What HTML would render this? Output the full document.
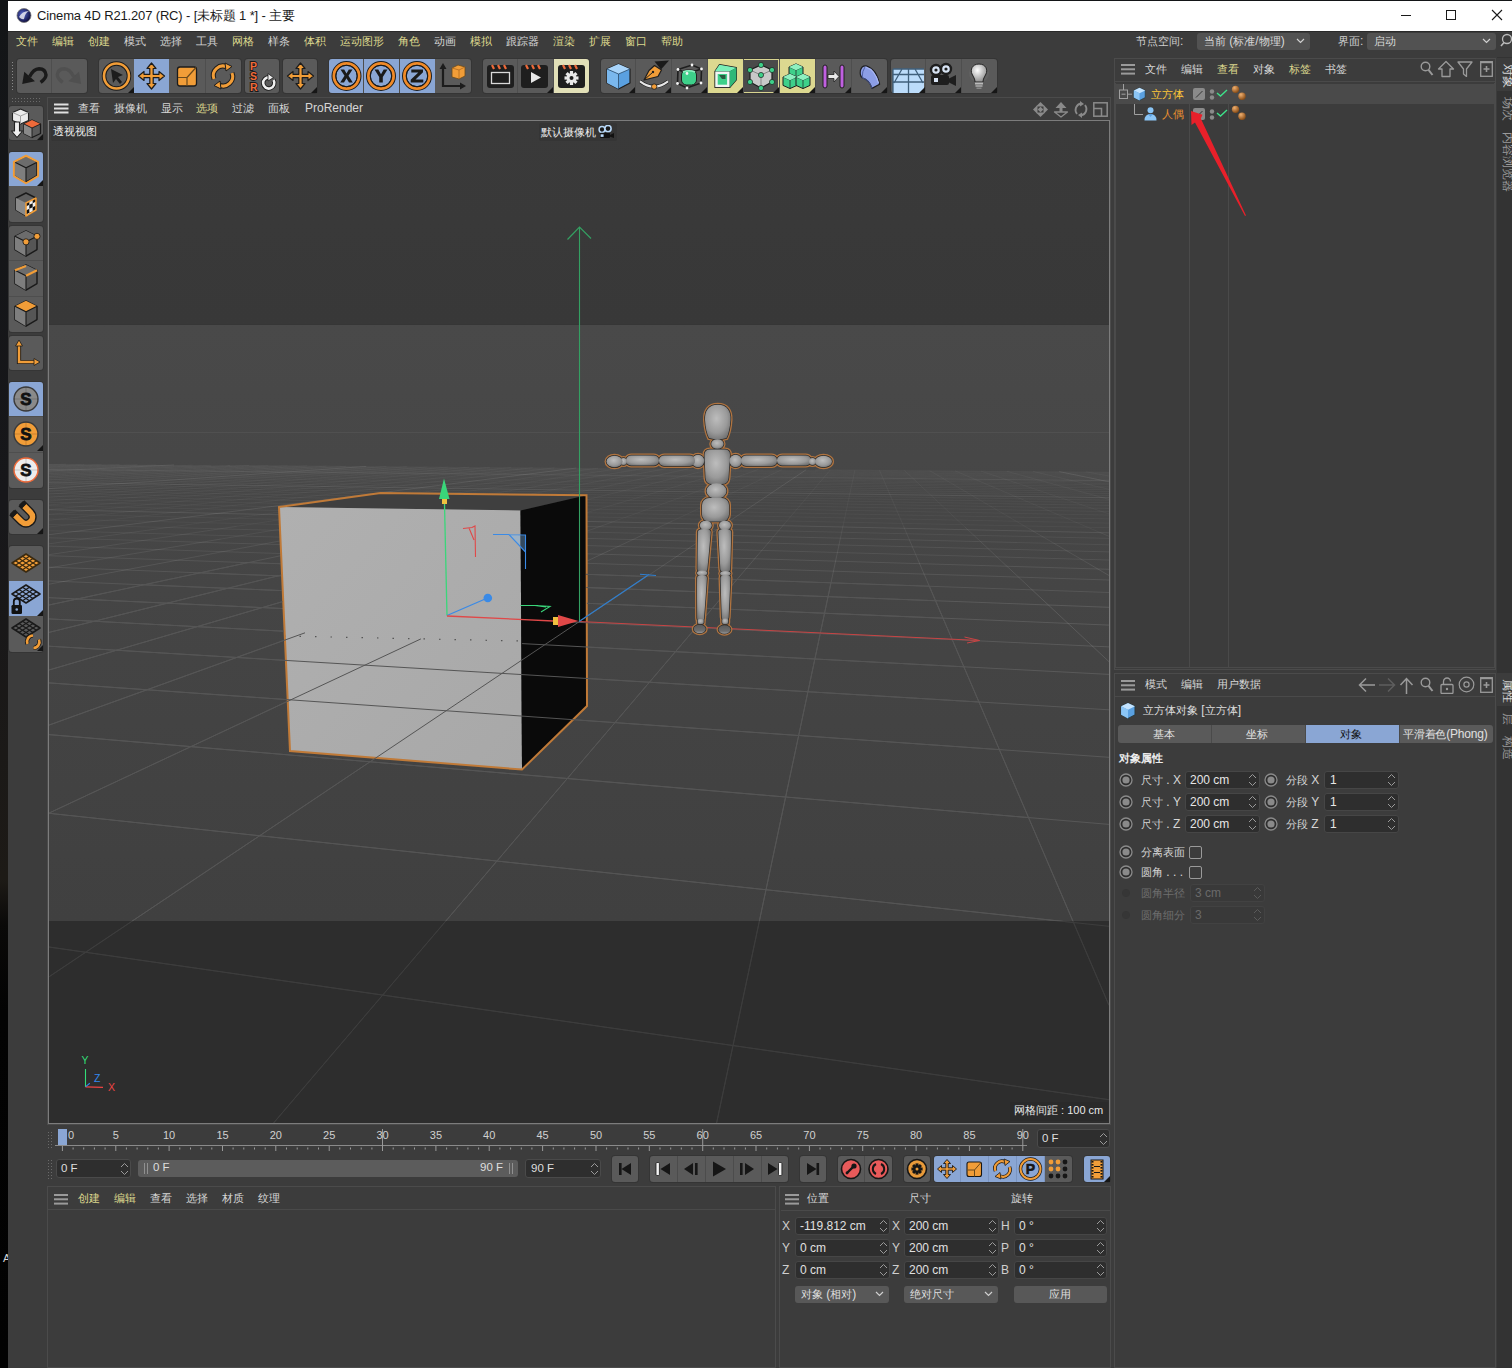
<!DOCTYPE html><html><head><meta charset="utf-8"><style>

*{margin:0;padding:0;box-sizing:border-box}
html,body{width:1512px;height:1368px;overflow:hidden;background:#121212}
body{position:relative;font-family:"Liberation Sans",sans-serif;font-size:12px;color:#d6d6d6}
.a{position:absolute}
.c{font-size:11px}
.t{position:absolute;white-space:nowrap;line-height:1}
.y{color:#dcd98e}
.w{color:#d9d9d9}
.grp{position:absolute;background:#5a5a5a;border-radius:3px;box-shadow:0 0 0 1px #333}
.sep{position:absolute;width:1px;background:#4a4a4a}
.hl{position:absolute;background:#8aa6d4}
.hy{position:absolute;background:#dedcaa}
.tri{position:absolute;width:0;height:0;border-left:6px solid transparent;border-bottom:6px solid #1a1a1a}
.fld{position:absolute;background:#2e2e2e;border:1px solid #262626;border-radius:3px}
.spin{position:absolute;width:8px;height:14px}


</style></head><body>
<div class="a" style="left:0px;top:0px;width:1512px;height:1368px;background:linear-gradient(#131517 0px,#17171a 500px,#1d1a16 880px,#0a0908 925px,#030303 1010px,#020202 1368px)"></div><div class="t" style="left:3px;top:1253px;font-size:11px;color:#d8d8d8">A</div><div class="a" style="left:8px;top:1px;width:1504px;height:30px;background:#ffffff"></div><div class="a" style="left:8px;top:31px;width:1504px;height:1337px;background:#3c3c3c"></div><div class="a" style="left:8px;top:31px;width:1504px;height:1px;background:#2a2a2a"></div>
<div class="a" style="left:47px;top:97px;width:1064px;height:1028px;border:1px solid #4b4b4b;background:#3c3c3c"></div><div class="a" style="left:48px;top:120px;width:1062px;height:1004px;border:1px solid #7c7c7c;background:#3a3a3a"></div><div class="a" style="left:1114px;top:58px;width:382px;height:612px;border:1px solid #4b4b4b;background:#3c3c3c"></div><div class="a" style="left:1114px;top:673px;width:382px;height:695px;border:1px solid #4b4b4b;background:#3c3c3c"></div><div class="a" style="left:1497px;top:57px;width:15px;height:1311px;background:#333333"></div><div class="a" style="left:47px;top:1186px;width:729px;height:182px;border:1px solid #4b4b4b;background:#3c3c3c"></div><div class="a" style="left:779px;top:1186px;width:332px;height:182px;border:1px solid #4b4b4b;background:#3c3c3c"></div>
<svg class="a" style="left:0;top:0" width="1512" height="1368" viewBox="0 0 1512 1368"><defs><clipPath id="vpc"><rect x="49" y="121" width="1060" height="1002"/></clipPath><linearGradient id="gnd" x1="0" y1="0" x2="0" y2="1"><stop offset="0" stop-color="#494949"/><stop offset="0.746" stop-color="#404040"/><stop offset="1" stop-color="#404040"/></linearGradient><linearGradient id="sky" x1="0" y1="0" x2="0" y2="1"><stop offset="0" stop-color="#3a3a3a"/><stop offset="1" stop-color="#383838"/></linearGradient><linearGradient id="ff" x1="0" y1="0" x2="1" y2="1"><stop offset="0" stop-color="#b0b0b0"/><stop offset="1" stop-color="#a8a8a8"/></linearGradient></defs><g clip-path="url(#vpc)"><rect x="49" y="121" width="1060" height="204" fill="url(#sky)"/><rect x="49" y="325" width="1060" height="798" fill="url(#gnd)"/><rect x="49" y="324" width="1060" height="1" fill="#363636"/><line x1="49" y1="432.5" x2="1109" y2="432.5" stroke="#505050" stroke-width="1"/><path d="M49.0 464.8L66.3 464.1M49.0 465.7L83.9 464.3M49.0 466.7L101.6 464.4M49.0 467.6L119.5 464.5M49.0 468.7L137.6 464.7M49.0 469.8L155.8 464.8M49.0 472.2L192.6 465.1M49.0 473.6L211.3 465.2M49.0 475.0L230.1 465.4M49.0 476.5L249.1 465.5M49.0 478.2L268.2 465.7M49.0 479.9L287.5 465.8M49.0 481.8L307.0 465.9M49.0 483.9L326.6 466.1M49.0 486.1L346.4 466.2M49.0 491.2L386.6 466.5M49.0 494.2L406.9 466.7M49.0 497.4L427.4 466.9M49.0 501.0L448.1 467.0M49.0 505.0L469.0 467.2M49.0 509.5L490.1 467.3M49.0 514.6L511.3 467.5M49.0 520.3L532.8 467.7M49.0 527.0L554.4 467.8M167.5 527.5L598.3 468.1M236.8 526.3L620.6 468.3M304.3 525.1L643.0 468.5M370.2 524.0L665.7 468.7M434.6 522.9L688.6 468.8M497.4 521.8L711.7 469.0M558.7 520.8L735.0 469.2M612.6 521.9L758.5 469.4M672.6 520.9L782.2 469.5M784.9 523.3L830.4 469.9M843.3 524.5L854.9 470.1M903.4 525.8L879.5 470.3M965.0 527.1L904.5 470.5M1028.5 528.4L929.6 470.6M1100.2 532.6L955.0 470.8M1109.0 513.9L980.7 471.0M1109.0 499.4L1006.6 471.2M1109.0 489.3L1032.8 471.4M1109.0 476.0L1085.9 471.8M49.0 530.7L75.3 531.4M49.0 524.4L167.5 527.5M49.0 518.9L278.4 524.5M49.0 514.0L408.4 522.3M49.0 505.7L1109.0 527.7M49.0 502.2L1109.0 523.1M49.0 499.0L1109.0 518.9M49.0 496.0L1109.0 515.1M49.0 493.3L1109.0 511.6M49.0 490.8L1109.0 508.4M49.0 488.5L1109.0 505.4M49.0 486.4L1109.0 502.7M49.0 484.5L1109.0 500.1M49.0 480.9L1109.0 495.5M49.0 479.3L1109.0 493.5M49.0 477.8L1109.0 491.5M49.0 476.4L1109.0 489.7M49.0 475.1L1109.0 488.0M49.0 473.9L1109.0 486.4M49.0 472.7L1109.0 484.8M49.0 471.6L1109.0 483.4M49.0 470.5L1109.0 482.0M49.0 468.6L1109.0 479.5M49.0 467.7L1109.0 478.3M49.0 466.8L1109.0 477.2M49.0 466.0L1109.0 476.2M49.0 465.2L1109.0 475.1M49.0 464.5L1109.0 474.2M227.5 465.3L1109.0 473.2M814.8 469.8L1109.0 472.4" stroke="#ffffff" stroke-opacity="0.040" stroke-width="1" fill="none"/><path d="M49.0 543.8L167.5 527.5M119.9 544.0L236.8 526.3M221.2 539.0L304.3 525.1M298.0 537.6L370.2 524.0M372.6 536.1L434.6 522.9M445.2 534.7L497.4 521.8M515.9 533.3L558.7 520.8M576.8 534.8L612.6 521.9M645.8 533.5L672.6 520.9M773.6 536.6L784.9 523.3M840.4 538.2L843.3 524.5M909.4 539.9L903.4 525.8M980.6 541.6L965.0 527.1M1054.1 543.4L1028.5 528.4M1109.0 536.3L1100.2 532.6M49.0 537.8L171.7 541.4M75.3 531.4L298.0 537.6M167.5 527.5L445.2 534.7M278.4 524.5L708.7 535.0M1017.0 542.5L1109.0 544.8M408.4 522.3L1109.0 538.4" stroke="#ffffff" stroke-opacity="0.058" stroke-width="1" fill="none"/><path d="M49.0 554.7L119.9 544.0M81.8 562.4L221.2 539.0M177.3 560.2L298.0 537.6M289.7 553.8L372.6 536.1M375.7 551.8L445.2 534.7M445.3 554.0L515.9 533.3M529.0 552.0L576.8 534.8M610.2 550.2L645.8 533.5M758.4 554.4L773.6 536.6M836.5 556.7L840.4 538.2M917.6 559.0L909.4 539.9M1001.7 561.4L980.6 541.6M1089.1 563.9L1054.1 543.4M49.0 555.7L177.3 560.2M49.0 546.1L324.0 554.9M171.7 541.4L493.7 551.0M298.0 537.6L1109.0 560.0M445.2 534.7L1109.0 551.9M708.7 535.0L1017.0 542.5" stroke="#ffffff" stroke-opacity="0.075" stroke-width="1" fill="none"/><path d="M49.0 471.0L174.1 464.9M49.0 488.6L366.4 466.4M49.0 534.7L576.3 468.0M49.0 567.9L81.8 562.4M49.0 584.2L177.3 560.2M111.8 591.6L289.7 553.8M227.6 588.3L375.7 551.8M338.8 585.2L445.3 554.0M445.5 582.2L529.0 552.0M548.1 579.2L610.2 550.2M637.8 582.5L806.2 469.7M736.9 579.6L758.4 554.4M831.0 582.8L836.5 556.7M929.3 586.2L917.6 559.0M1032.1 589.8L1001.7 561.4M1109.0 575.5L1089.1 563.9M1109.0 481.8L1059.2 471.6M49.0 580.9L227.6 588.3M49.0 567.1L445.5 582.2M177.3 560.2L1109.0 592.5M324.0 554.9L1109.0 580.0M493.7 551.0L1109.0 569.3M49.0 509.7L1109.0 532.8M49.0 482.6L1109.0 497.7M49.0 469.5L1109.0 480.7" stroke="#ffffff" stroke-opacity="0.092" stroke-width="1" fill="none"/><path d="M49.0 605.0L111.8 591.6M49.0 632.4L227.6 588.3M49.0 670.0L338.8 585.2M49.0 725.1L445.5 582.2M49.0 813.1L548.1 579.2M49.0 976.8L637.8 582.5M273.6 1123.0L736.9 579.6M716.6 1123.0L831.0 582.8M1109.0 1005.3L929.3 586.2M1109.0 661.7L1032.1 589.8M49.0 947.0L1109.0 1099.7M49.0 813.3L1109.0 926.3M49.0 734.6L1109.0 824.4M49.0 682.9L1109.0 757.3M49.0 646.2L1109.0 709.8M49.0 618.9L1109.0 674.4M49.0 597.7L1109.0 646.9M227.6 588.3L1109.0 625.1M445.5 582.2L1109.0 607.3" stroke="#ffffff" stroke-opacity="0.115" stroke-width="1" fill="none"/><polygon points="279,507 380.6,493 586.5,495.3 520.5,510.5" fill="#3f3f3f" /><polygon points="279,507 520.5,510.5 522,769.5 290,751" fill="url(#ff)" /><polygon points="520.5,510.5 586.5,495.3 587,706 522,769.5" fill="#0a0a0a" /><path d="M284 636 L521 641" stroke="#555" stroke-width="1.2" stroke-dasharray="1.5 14" fill="none"/><polygon points="279,507 380.6,493 586.5,495.3 587,706 522,769.5 290,751" fill="none" stroke="#c07a38" stroke-width="2" stroke-linejoin="miter"/><path d="M49.0 605.0L248.1 562.6M49.0 632.4L281.2 575.1M49.0 670.0L282.5 601.7M49.0 725.1L305.0 632.8M49.0 813.1L420.9 638.9M49.0 976.8L646.8 576.4M273.6 1123.0L736.9 579.6M716.6 1123.0L831.0 582.8M1109.0 1005.3L929.3 586.2M49.0 947.0L1109.0 1099.7M49.0 813.3L1073.5 922.5M49.0 734.6L1028.5 817.6M49.0 682.9L999.3 749.6M49.0 646.2L978.9 702.0M49.0 618.9L283.9 631.2M522.1 643.6L963.8 666.8M77.0 599.0L281.6 608.5M557.9 621.4L952.2 639.7M143.7 584.8L281.6 590.6M586.9 603.3L943.0 618.2M200.0 572.9L280.0 575.9M586.4 587.5L935.5 600.7M248.1 562.6L280.1 563.7M586.0 574.3L929.3 586.2" stroke="#555555" stroke-width="1" fill="none"/><rect x="49" y="921" width="1060" height="202" fill="#000" fill-opacity="0.285"/><path d="M579.5 621.5 V227" stroke="#34a062" stroke-width="1.1" fill="none"/><path d="M567.5 239.5 L579.5 227 L591 238.5" stroke="#34a062" stroke-width="1.2" fill="none"/><path d="M579 621.5 L979.5 640.5" stroke="#c84444" stroke-width="1" fill="none"/><path d="M964.5 637 L979.5 640.5 L967 643" stroke="#c84444" stroke-width="1" fill="none"/><path d="M579 621.5 L649 574.5 M640 574.3 L656 575.5" stroke="#2f7fd0" stroke-width="1.1" fill="none"/><path d="M447 615.5 L444.5 504" stroke="#3ad67a" stroke-width="1.3" fill="none"/><rect x="442" y="498.5" width="5" height="5.5" fill="#f0c040"/><polygon points="444,478.5 439,499 449.5,499" fill="#3ad67a"/><path d="M447 615.5 L487.5 598" stroke="#3a8ae6" stroke-width="1.3" fill="none"/><circle cx="487.8" cy="598" r="4.3" fill="#3a8ae6"/><path d="M447 616 L553 621" stroke="#e04848" stroke-width="1.3" fill="none"/><rect x="553" y="617" width="6" height="8" fill="#f0c040"/><polygon points="558,615 578.5,621 558,627" fill="#e04848"/><path d="M463 528.5 L472 527.5 L475 526 L475.5 557 M469 528 L474 540" stroke="#e04848" stroke-width="1.1" fill="none"/><polygon points="509,534.5 520.5,534.8 520.5,546.5" fill="#9cb2c6"/><polygon points="520.5,534.8 525.5,535 525.5,552 520.5,546.5" fill="#33495e"/><path d="M493 534.5 L509 534.5 L525.5 552 M509 534.5 L525.5 535 L525.5 569" stroke="#3a8ae6" stroke-width="1.1" fill="none"/><path d="M520.5 605.5 L535 605.5 L550 606.5 L541 612 M535 605.5 L546 607" stroke="#3ad67a" stroke-width="1.1" fill="none"/><defs><radialGradient id="fg" cx="0.45" cy="0.4" r="0.7"><stop offset="0" stop-color="#bdbdbd"/><stop offset="0.6" stop-color="#9a9a9a"/><stop offset="1" stop-color="#6a6a6a"/></radialGradient><linearGradient id="ftg" x1="0" y1="0" x2="0" y2="1"><stop offset="0" stop-color="#5a5a5a"/><stop offset="0.7" stop-color="#6e6e6e"/><stop offset="1" stop-color="#9a9a9a"/></linearGradient></defs><path d="M717.8 404.8 C727 404.8 731 411 730.5 420 C730 428 728.5 434 726.5 438 Q718 440.5 709 438 C707 434 705.5 428 705 420 C704.6 411 708.6 404.8 717.8 404.8Z" fill="#b07440" stroke="#b07440" stroke-width="4"/><ellipse cx="717.4" cy="444" rx="6.2" ry="4.8" fill="#b07440" stroke="#b07440" stroke-width="4"/><path d="M710 449.5 L725 449.5 Q730 449.5 730 455 L728.5 478 Q728 484 722 484 L712 484 Q706 484 705.5 478 L704.5 455 Q704.5 449.5 710 449.5Z" fill="#b07440" stroke="#b07440" stroke-width="4"/><ellipse cx="716.5" cy="491" rx="10" ry="7.8" fill="#b07440" stroke="#b07440" stroke-width="4"/><rect x="702" y="498" width="27" height="23.5" rx="7" fill="#b07440" stroke="#b07440" stroke-width="4"/><ellipse cx="698" cy="461" rx="6.2" ry="6.2" fill="#b07440" stroke="#b07440" stroke-width="4"/><ellipse cx="735.6" cy="461" rx="6.2" ry="6.2" fill="#b07440" stroke="#b07440" stroke-width="4"/><rect x="659" y="455.5" width="36" height="10.5" rx="5" fill="#b07440" stroke="#b07440" stroke-width="4"/><rect x="626" y="455.5" width="33" height="10" rx="5" fill="#b07440" stroke="#b07440" stroke-width="4"/><ellipse cx="623.5" cy="461.5" rx="3.5" ry="3.5" fill="#b07440" stroke="#b07440" stroke-width="4"/><ellipse cx="614.5" cy="461.5" rx="8" ry="5.8" fill="#b07440" stroke="#b07440" stroke-width="4"/><rect x="741" y="455.5" width="36" height="10.5" rx="5" fill="#b07440" stroke="#b07440" stroke-width="4"/><rect x="777" y="455.5" width="34" height="10" rx="5" fill="#b07440" stroke="#b07440" stroke-width="4"/><ellipse cx="812.5" cy="461.5" rx="3.5" ry="3.5" fill="#b07440" stroke="#b07440" stroke-width="4"/><ellipse cx="823.5" cy="461.5" rx="8.5" ry="5.8" fill="#b07440" stroke="#b07440" stroke-width="4"/><ellipse cx="705.8" cy="525.5" rx="6" ry="4.8" fill="#b07440" stroke="#b07440" stroke-width="4"/><ellipse cx="725" cy="525.5" rx="6" ry="4.8" fill="#b07440" stroke="#b07440" stroke-width="4"/><path d="M697.8 532.0 Q697.8 529.0 704.3 529.0 Q710.8 529.0 710.8 532.0 L707.4 569.0 Q707.4 572.0 702.4 572.0 Q697.4 572.0 697.4 569.0Z" fill="#b07440" stroke="#b07440" stroke-width="4"/><path d="M718.3 532.0 Q718.3 529.0 724.8 529.0 Q731.3 529.0 731.3 532.0 L730.3 569.0 Q730.3 572.0 725.3 572.0 Q720.3 572.0 720.3 569.0Z" fill="#b07440" stroke="#b07440" stroke-width="4"/><ellipse cx="702.2" cy="573" rx="5.2" ry="2.6" fill="#b07440" stroke="#b07440" stroke-width="4"/><ellipse cx="725.4" cy="573.5" rx="5.2" ry="2.6" fill="#b07440" stroke="#b07440" stroke-width="4"/><path d="M697.0 578.0 Q697.0 575.0 702.0 575.0 Q707.0 575.0 707.0 578.0 L704.1 618.0 Q704.1 621.0 700.6 621.0 Q697.1 621.0 697.1 618.0Z" fill="#b07440" stroke="#b07440" stroke-width="4"/><path d="M720.5 578.0 Q720.5 575.0 725.5 575.0 Q730.5 575.0 730.5 578.0 L728.7 617.0 Q728.7 620.0 725.2 620.0 Q721.7 620.0 721.7 617.0Z" fill="#b07440" stroke="#b07440" stroke-width="4"/><rect x="697.7" y="619" width="6" height="5" rx="1.5" fill="#b07440" stroke="#b07440" stroke-width="4"/><rect x="722.2" y="618.5" width="6" height="5.5" rx="1.5" fill="#b07440" stroke="#b07440" stroke-width="4"/><ellipse cx="699.7" cy="629" rx="6" ry="4.2" fill="#b07440" stroke="#b07440" stroke-width="4"/><ellipse cx="724.5" cy="629.5" rx="6" ry="4.2" fill="#b07440" stroke="#b07440" stroke-width="4"/><path d="M717.8 404.8 C727 404.8 731 411 730.5 420 C730 428 728.5 434 726.5 438 Q718 440.5 709 438 C707 434 705.5 428 705 420 C704.6 411 708.6 404.8 717.8 404.8Z" fill="#2a2a2a" stroke="#2a2a2a" stroke-width="1.4"/><ellipse cx="717.4" cy="444" rx="6.2" ry="4.8" fill="#2a2a2a" stroke="#2a2a2a" stroke-width="1.4"/><path d="M710 449.5 L725 449.5 Q730 449.5 730 455 L728.5 478 Q728 484 722 484 L712 484 Q706 484 705.5 478 L704.5 455 Q704.5 449.5 710 449.5Z" fill="#2a2a2a" stroke="#2a2a2a" stroke-width="1.4"/><ellipse cx="716.5" cy="491" rx="10" ry="7.8" fill="#2a2a2a" stroke="#2a2a2a" stroke-width="1.4"/><rect x="702" y="498" width="27" height="23.5" rx="7" fill="#2a2a2a" stroke="#2a2a2a" stroke-width="1.4"/><ellipse cx="698" cy="461" rx="6.2" ry="6.2" fill="#2a2a2a" stroke="#2a2a2a" stroke-width="1.4"/><ellipse cx="735.6" cy="461" rx="6.2" ry="6.2" fill="#2a2a2a" stroke="#2a2a2a" stroke-width="1.4"/><rect x="659" y="455.5" width="36" height="10.5" rx="5" fill="#2a2a2a" stroke="#2a2a2a" stroke-width="1.4"/><rect x="626" y="455.5" width="33" height="10" rx="5" fill="#2a2a2a" stroke="#2a2a2a" stroke-width="1.4"/><ellipse cx="623.5" cy="461.5" rx="3.5" ry="3.5" fill="#2a2a2a" stroke="#2a2a2a" stroke-width="1.4"/><ellipse cx="614.5" cy="461.5" rx="8" ry="5.8" fill="#2a2a2a" stroke="#2a2a2a" stroke-width="1.4"/><rect x="741" y="455.5" width="36" height="10.5" rx="5" fill="#2a2a2a" stroke="#2a2a2a" stroke-width="1.4"/><rect x="777" y="455.5" width="34" height="10" rx="5" fill="#2a2a2a" stroke="#2a2a2a" stroke-width="1.4"/><ellipse cx="812.5" cy="461.5" rx="3.5" ry="3.5" fill="#2a2a2a" stroke="#2a2a2a" stroke-width="1.4"/><ellipse cx="823.5" cy="461.5" rx="8.5" ry="5.8" fill="#2a2a2a" stroke="#2a2a2a" stroke-width="1.4"/><ellipse cx="705.8" cy="525.5" rx="6" ry="4.8" fill="#2a2a2a" stroke="#2a2a2a" stroke-width="1.4"/><ellipse cx="725" cy="525.5" rx="6" ry="4.8" fill="#2a2a2a" stroke="#2a2a2a" stroke-width="1.4"/><path d="M697.8 532.0 Q697.8 529.0 704.3 529.0 Q710.8 529.0 710.8 532.0 L707.4 569.0 Q707.4 572.0 702.4 572.0 Q697.4 572.0 697.4 569.0Z" fill="#2a2a2a" stroke="#2a2a2a" stroke-width="1.4"/><path d="M718.3 532.0 Q718.3 529.0 724.8 529.0 Q731.3 529.0 731.3 532.0 L730.3 569.0 Q730.3 572.0 725.3 572.0 Q720.3 572.0 720.3 569.0Z" fill="#2a2a2a" stroke="#2a2a2a" stroke-width="1.4"/><ellipse cx="702.2" cy="573" rx="5.2" ry="2.6" fill="#2a2a2a" stroke="#2a2a2a" stroke-width="1.4"/><ellipse cx="725.4" cy="573.5" rx="5.2" ry="2.6" fill="#2a2a2a" stroke="#2a2a2a" stroke-width="1.4"/><path d="M697.0 578.0 Q697.0 575.0 702.0 575.0 Q707.0 575.0 707.0 578.0 L704.1 618.0 Q704.1 621.0 700.6 621.0 Q697.1 621.0 697.1 618.0Z" fill="#2a2a2a" stroke="#2a2a2a" stroke-width="1.4"/><path d="M720.5 578.0 Q720.5 575.0 725.5 575.0 Q730.5 575.0 730.5 578.0 L728.7 617.0 Q728.7 620.0 725.2 620.0 Q721.7 620.0 721.7 617.0Z" fill="#2a2a2a" stroke="#2a2a2a" stroke-width="1.4"/><rect x="697.7" y="619" width="6" height="5" rx="1.5" fill="#2a2a2a" stroke="#2a2a2a" stroke-width="1.4"/><rect x="722.2" y="618.5" width="6" height="5.5" rx="1.5" fill="#2a2a2a" stroke="#2a2a2a" stroke-width="1.4"/><ellipse cx="699.7" cy="629" rx="6" ry="4.2" fill="#2a2a2a" stroke="#2a2a2a" stroke-width="1.4"/><ellipse cx="724.5" cy="629.5" rx="6" ry="4.2" fill="#2a2a2a" stroke="#2a2a2a" stroke-width="1.4"/><path d="M717.8 404.8 C727 404.8 731 411 730.5 420 C730 428 728.5 434 726.5 438 Q718 440.5 709 438 C707 434 705.5 428 705 420 C704.6 411 708.6 404.8 717.8 404.8Z" fill="url(#fg)"/><ellipse cx="717.4" cy="444" rx="6.2" ry="4.8" fill="url(#fg)"/><path d="M710 449.5 L725 449.5 Q730 449.5 730 455 L728.5 478 Q728 484 722 484 L712 484 Q706 484 705.5 478 L704.5 455 Q704.5 449.5 710 449.5Z" fill="url(#fg)"/><ellipse cx="716.5" cy="491" rx="10" ry="7.8" fill="url(#fg)"/><rect x="702" y="498" width="27" height="23.5" rx="7" fill="url(#fg)"/><ellipse cx="698" cy="461" rx="6.2" ry="6.2" fill="url(#fg)"/><ellipse cx="735.6" cy="461" rx="6.2" ry="6.2" fill="url(#fg)"/><rect x="659" y="455.5" width="36" height="10.5" rx="5" fill="url(#fg)"/><rect x="626" y="455.5" width="33" height="10" rx="5" fill="url(#fg)"/><ellipse cx="623.5" cy="461.5" rx="3.5" ry="3.5" fill="url(#fg)"/><ellipse cx="614.5" cy="461.5" rx="8" ry="5.8" fill="url(#fg)"/><rect x="741" y="455.5" width="36" height="10.5" rx="5" fill="url(#fg)"/><rect x="777" y="455.5" width="34" height="10" rx="5" fill="url(#fg)"/><ellipse cx="812.5" cy="461.5" rx="3.5" ry="3.5" fill="url(#fg)"/><ellipse cx="823.5" cy="461.5" rx="8.5" ry="5.8" fill="url(#fg)"/><ellipse cx="705.8" cy="525.5" rx="6" ry="4.8" fill="url(#fg)"/><ellipse cx="725" cy="525.5" rx="6" ry="4.8" fill="url(#fg)"/><path d="M697.8 532.0 Q697.8 529.0 704.3 529.0 Q710.8 529.0 710.8 532.0 L707.4 569.0 Q707.4 572.0 702.4 572.0 Q697.4 572.0 697.4 569.0Z" fill="url(#fg)"/><path d="M718.3 532.0 Q718.3 529.0 724.8 529.0 Q731.3 529.0 731.3 532.0 L730.3 569.0 Q730.3 572.0 725.3 572.0 Q720.3 572.0 720.3 569.0Z" fill="url(#fg)"/><ellipse cx="702.2" cy="573" rx="5.2" ry="2.6" fill="url(#fg)"/><ellipse cx="725.4" cy="573.5" rx="5.2" ry="2.6" fill="url(#fg)"/><path d="M697.0 578.0 Q697.0 575.0 702.0 575.0 Q707.0 575.0 707.0 578.0 L704.1 618.0 Q704.1 621.0 700.6 621.0 Q697.1 621.0 697.1 618.0Z" fill="url(#fg)"/><path d="M720.5 578.0 Q720.5 575.0 725.5 575.0 Q730.5 575.0 730.5 578.0 L728.7 617.0 Q728.7 620.0 725.2 620.0 Q721.7 620.0 721.7 617.0Z" fill="url(#fg)"/><rect x="697.7" y="619" width="6" height="5" rx="1.5" fill="url(#fg)"/><rect x="722.2" y="618.5" width="6" height="5.5" rx="1.5" fill="url(#fg)"/><ellipse cx="699.7" cy="629" rx="6" ry="4.2" fill="url(#ftg)"/><ellipse cx="724.5" cy="629.5" rx="6" ry="4.2" fill="url(#ftg)"/></g></svg>
<svg class="a" style="left:16px;top:8px" width="16" height="15" viewBox="0 0 16 15"><defs><radialGradient id="c4g" cx="0.4" cy="0.4" r="0.6"><stop offset="0" stop-color="#5566cc"/><stop offset="1" stop-color="#101040"/></radialGradient></defs><circle cx="8" cy="7.5" r="7" fill="url(#c4g)"/><path d="M3 9 Q6 3 13 3 Q9 5 8 11 Q6 12 3 9Z" fill="#e8e8f0" opacity="0.85"/><circle cx="8" cy="7.5" r="7" fill="none" stroke="#777" stroke-width="0.8"/></svg><div class="t" style="left:37px;top:9px;font-size:13px;color:#1a1a1a;letter-spacing:-0.15px">Cinema 4D R21.207 (RC) - [未标题 1 *] - 主要</div><div class="a" style="left:1401px;top:15px;width:10px;height:1px;background:#1a1a1a"></div><div class="a" style="left:1446px;top:10px;width:10px;height:10px;border:1px solid #1a1a1a"></div><svg class="a" style="left:1491px;top:9px" width="12" height="12" viewBox="0 0 12 12"><path d="M1 1L11 11M11 1L1 11" stroke="#1a1a1a" stroke-width="1.1"/></svg>
<div class="t" style="left:16px;top:35px;font-size:12px;color:#dcd88e"><span class="c">文件</span></div><div class="t" style="left:52px;top:35px;font-size:12px;color:#dcd88e"><span class="c">编辑</span></div><div class="t" style="left:88px;top:35px;font-size:12px;color:#dcd88e"><span class="c">创建</span></div><div class="t" style="left:124px;top:35px;font-size:12px;color:#d4d4d4"><span class="c">模式</span></div><div class="t" style="left:160px;top:35px;font-size:12px;color:#d4d4d4"><span class="c">选择</span></div><div class="t" style="left:196px;top:35px;font-size:12px;color:#d4d4d4"><span class="c">工具</span></div><div class="t" style="left:232px;top:35px;font-size:12px;color:#dcd88e"><span class="c">网格</span></div><div class="t" style="left:268px;top:35px;font-size:12px;color:#d4d4d4"><span class="c">样条</span></div><div class="t" style="left:304px;top:35px;font-size:12px;color:#dcd88e"><span class="c">体积</span></div><div class="t" style="left:340px;top:35px;font-size:12px;color:#dcd88e"><span class="c">运动图形</span></div><div class="t" style="left:398px;top:35px;font-size:12px;color:#dcd88e"><span class="c">角色</span></div><div class="t" style="left:434px;top:35px;font-size:12px;color:#d4d4d4"><span class="c">动画</span></div><div class="t" style="left:470px;top:35px;font-size:12px;color:#dcd88e"><span class="c">模拟</span></div><div class="t" style="left:506px;top:35px;font-size:12px;color:#d4d4d4"><span class="c">跟踪器</span></div><div class="t" style="left:553px;top:35px;font-size:12px;color:#dcd88e"><span class="c">渲染</span></div><div class="t" style="left:589px;top:35px;font-size:12px;color:#dcd88e"><span class="c">扩展</span></div><div class="t" style="left:625px;top:35px;font-size:12px;color:#dcd88e"><span class="c">窗口</span></div><div class="t" style="left:661px;top:35px;font-size:12px;color:#dcd88e"><span class="c">帮助</span></div><div class="t" style="left:1136px;top:35px;font-size:12px;color:#cfcfcf"><span class="c">节点空间</span>:</div><div class="a" style="left:1197px;top:33px;width:113px;height:17px;background:#525252;border-radius:3px"></div><div class="t" style="left:1204px;top:35px;font-size:12px;color:#d8d8d8"><span class="c">当前</span> (<span class="c">标准</span>/<span class="c">物理</span>)</div><svg class="a" style="left:1296px;top:38px" width="9" height="6" viewBox="0 0 9 6"><path d="M1 1L4.5 4.5L8 1" stroke="#d0d0d0" stroke-width="1.2" fill="none"/></svg><div class="t" style="left:1338px;top:35px;font-size:12px;color:#cfcfcf"><span class="c">界面</span>:</div><div class="a" style="left:1367px;top:33px;width:129px;height:17px;background:#525252;border-radius:3px"></div><div class="t" style="left:1374px;top:35px;font-size:12px;color:#d8d8d8"><span class="c">启动</span></div><svg class="a" style="left:1482px;top:38px" width="9" height="6" viewBox="0 0 9 6"><path d="M1 1L4.5 4.5L8 1" stroke="#d0d0d0" stroke-width="1.2" fill="none"/></svg><svg class="a" style="left:1500px;top:33px" width="12" height="14" viewBox="0 0 12 14"><circle cx="7" cy="6" r="4.5" stroke="#bbb" stroke-width="1.3" fill="none"/><path d="M4 9.5L1 13" stroke="#bbb" stroke-width="1.6"/></svg>
<svg class="a" style="left:12px;top:62px" width="3" height="30" viewBox="0 0 3 30"><rect x="0" y="0" width="1" height="1" fill="#8a8a8a"/><rect x="0" y="3" width="1" height="1" fill="#8a8a8a"/><rect x="0" y="6" width="1" height="1" fill="#8a8a8a"/><rect x="0" y="9" width="1" height="1" fill="#8a8a8a"/><rect x="0" y="12" width="1" height="1" fill="#8a8a8a"/><rect x="0" y="15" width="1" height="1" fill="#8a8a8a"/><rect x="0" y="18" width="1" height="1" fill="#8a8a8a"/><rect x="0" y="21" width="1" height="1" fill="#8a8a8a"/><rect x="0" y="24" width="1" height="1" fill="#8a8a8a"/><rect x="0" y="27" width="1" height="1" fill="#8a8a8a"/></svg><div class="a" style="left:17px;top:59px;width:70px;height:34px;background:#5a5a5a;border-radius:3px;box-shadow:0 0 0 1px #353535"></div><div class="a" style="left:51px;top:59px;width:1px;height:34px;background:#4e4e4e"></div><svg class="a" style="left:20px;top:62px" width="30" height="28" viewBox="0 0 30 28"><polygon points="4.3,9.7 2.2,21.9 15,19.2" fill="#1a1a1a"/><path d="M9.6 14.8 Q13.5 7 19 6.8 Q25.5 7 26 13 Q26 16.5 20.6 20.3" stroke="#1a1a1a" stroke-width="3.4" fill="none"/></svg><svg class="a" style="left:54px;top:62px" width="30" height="28" viewBox="0 0 30 28"><g transform="translate(29.3 0) scale(-1 1)"><polygon points="4.3,9.7 2.2,21.9 15,19.2" fill="#505050"/><path d="M9.6 14.8 Q13.5 7 19 6.8 Q25.5 7 26 13 Q26 16.5 20.6 20.3" stroke="#505050" stroke-width="3.4" fill="none"/></g></svg><div class="a" style="left:99px;top:59px;width:142px;height:34px;background:#5a5a5a;border-radius:3px;box-shadow:0 0 0 1px #353535"></div><div class="a" style="left:134px;top:59px;width:35px;height:34px;background:#8aa6d4;border-radius:0 0 0 0"></div><div class="a" style="left:205px;top:59px;width:1px;height:34px;background:#4e4e4e"></div><svg class="a" style="left:99px;top:59px" width="35" height="34" viewBox="0 0 35 34"><circle cx="17.5" cy="17" r="12.5" fill="none" stroke="#1c1c1c" stroke-width="4.5"/><circle cx="17.5" cy="17" r="12.5" fill="none" stroke="#f19d38" stroke-width="2.6"/><path d="M12 10 L24 16 L19 18 L23 23 L21 25 L17 20 L14 24Z" fill="#1c1c1c"/></svg><svg class="a" style="left:128px;top:87px" width="6" height="6" viewBox="0 0 6 6"><polygon points="6,0 6,6 0,6" fill="#161616"/></svg><svg class="a" style="left:134px;top:59px" width="35" height="34" viewBox="0 0 35 34"><path d="M17.5 4 L22 9.5 L19.2 9.5 L19.2 15.3 L25 15.3 L25 12.5 L30.5 17 L25 21.5 L25 18.7 L19.2 18.7 L19.2 24.5 L22 24.5 L17.5 30 L13 24.5 L15.8 24.5 L15.8 18.7 L10 18.7 L10 21.5 L4.5 17 L10 12.5 L10 15.3 L15.8 15.3 L15.8 9.5 L13 9.5Z" fill="#f19d38" stroke="#1c1c1c" stroke-width="1.2" stroke-linejoin="round"/></svg><svg class="a" style="left:169px;top:59px" width="36" height="34" viewBox="0 0 36 34"><rect x="8.5" y="8" width="19" height="19" rx="2.5" fill="#f19d38" stroke="#1c1c1c" stroke-width="1.3"/><path d="M9 18.5 L18 18.5 L18 27 M18 18.5 L27 8.5" stroke="#6b4a1c" stroke-width="1.2" fill="none"/></svg><svg class="a" style="left:205px;top:59px" width="36" height="34" viewBox="0 0 36 34"><path d="M9 20 A9.5 9.5 0 0 1 22 8" stroke="#1c1c1c" stroke-width="5" fill="none"/><path d="M27 14 A9.5 9.5 0 0 1 14 26" stroke="#1c1c1c" stroke-width="5" fill="none"/><path d="M9 20 A9.5 9.5 0 0 1 22 8" stroke="#f19d38" stroke-width="3" fill="none"/><path d="M27 14 A9.5 9.5 0 0 1 14 26" stroke="#f19d38" stroke-width="3" fill="none"/><path d="M20 4 L27 7.5 L21 12Z" fill="#f19d38" stroke="#1c1c1c" stroke-width="1"/><path d="M16 30 L9 26.5 L15 22Z" fill="#f19d38" stroke="#1c1c1c" stroke-width="1"/></svg><div class="a" style="left:245px;top:59px;width:34px;height:34px;background:#5a5a5a;border-radius:3px;box-shadow:0 0 0 1px #353535"></div><svg class="a" style="left:245px;top:59px" width="34" height="34" viewBox="0 0 34 34"><g font-family="Liberation Sans" font-weight="700" font-size="10.5" fill="#f06a38" stroke="#1a1a1a" stroke-width="1.8" paint-order="stroke"><text x="5" y="11">P</text><text x="5" y="21">S</text><text x="5" y="31.5">R</text></g><path d="M28.5 21 A5.6 5.6 0 1 1 24.5 18.4" stroke="#1a1a1a" stroke-width="4.4" fill="none"/><path d="M28.5 21 A5.6 5.6 0 1 1 24.5 18.4" stroke="#f0f0f0" stroke-width="2.6" fill="none"/><polygon points="23,14.5 28.5,18.6 23,22" fill="#f0f0f0" stroke="#1a1a1a" stroke-width="0.8"/></svg><div class="a" style="left:283px;top:59px;width:34px;height:34px;background:#5a5a5a;border-radius:3px;box-shadow:0 0 0 1px #353535"></div><svg class="a" style="left:283px;top:59px" width="34" height="34" viewBox="0 0 34 34"><path d="M17.5 4 L22 9.5 L19.2 9.5 L19.2 15.3 L25 15.3 L25 12.5 L30.5 17 L25 21.5 L25 18.7 L19.2 18.7 L19.2 24.5 L22 24.5 L17.5 30 L13 24.5 L15.8 24.5 L15.8 18.7 L10 18.7 L10 21.5 L4.5 17 L10 12.5 L10 15.3 L15.8 15.3 L15.8 9.5 L13 9.5Z" fill="#f19d38" stroke="#1c1c1c" stroke-width="1.2" stroke-linejoin="round"/></svg><svg class="a" style="left:311px;top:87px" width="6" height="6" viewBox="0 0 6 6"><polygon points="6,0 6,6 0,6" fill="#161616"/></svg><div class="a" style="left:329px;top:59px;width:142px;height:34px;background:#5a5a5a;border-radius:3px;box-shadow:0 0 0 1px #353535"></div><div class="a" style="left:329px;top:59px;width:106px;height:34px;background:#8aa6d4;border-radius:3px 0 0 3px"></div><div class="a" style="left:363px;top:59px;width:1px;height:34px;background:#4e4e4e"></div><div class="a" style="left:399px;top:59px;width:1px;height:34px;background:#4e4e4e"></div><svg class="a" style="left:329px;top:59px" width="35" height="34" viewBox="0 0 35 34"><circle cx="17.5" cy="17" r="12.6" fill="none" stroke="#1c1c1c" stroke-width="4.8"/><circle cx="17.5" cy="17" r="12.6" fill="none" stroke="#f08a28" stroke-width="2.8"/><circle cx="17.5" cy="17" r="10.7" fill="none" stroke="#1a1a1a" stroke-width="0.9"/><g transform="translate(0.0 0)"><polygon points="11.5,10.5 15.2,10.5 17.5,14.4 19.8,10.5 23.5,10.5 19.5,16.8 23.8,23.5 20,23.5 17.5,19.3 15,23.5 11.2,23.5 15.5,16.8" fill="#1a1a1a"/></g></svg><svg class="a" style="left:363px;top:59px" width="36" height="34" viewBox="0 0 36 34"><circle cx="18.0" cy="17" r="12.6" fill="none" stroke="#1c1c1c" stroke-width="4.8"/><circle cx="18.0" cy="17" r="12.6" fill="none" stroke="#f08a28" stroke-width="2.8"/><circle cx="18.0" cy="17" r="10.7" fill="none" stroke="#1a1a1a" stroke-width="0.9"/><g transform="translate(0.5 0)"><polygon points="11,10.5 14.8,10.5 17.5,15.3 20.2,10.5 24,10.5 19.3,18 19.3,23.5 15.7,23.5 15.7,18" fill="#1a1a1a"/></g></svg><svg class="a" style="left:399px;top:59px" width="36" height="34" viewBox="0 0 36 34"><circle cx="18.0" cy="17" r="12.6" fill="none" stroke="#1c1c1c" stroke-width="4.8"/><circle cx="18.0" cy="17" r="12.6" fill="none" stroke="#f08a28" stroke-width="2.8"/><circle cx="18.0" cy="17" r="10.7" fill="none" stroke="#1a1a1a" stroke-width="0.9"/><g transform="translate(0.5 0)"><polygon points="11.8,10.5 23.5,10.5 23.5,13.2 16,20.6 23.8,20.6 23.8,23.5 11.2,23.5 11.2,20.8 18.8,13.4 11.8,13.4" fill="#1a1a1a"/></g></svg><svg class="a" style="left:435px;top:59px" width="36" height="34" viewBox="0 0 36 34"><path d="M8 8 L8 27 L27 27" stroke="#1c1c1c" stroke-width="2.2" fill="none"/><polygon points="4.5,10 8,4 11.5,10" fill="#1c1c1c"/><polygon points="25,23.5 31,27 25,30.5" fill="#1c1c1c"/><path d="M17 9 L23 6 L30 8 L30 17 L24 20 L17 18Z" fill="#f19d38" stroke="#6b4a1c" stroke-width="0.8"/><path d="M17 9 L24 11 L30 8 M24 11 L24 20" stroke="#b06a20" stroke-width="0.8" fill="none"/></svg><div class="a" style="left:483px;top:59px;width:106px;height:34px;background:#5a5a5a;border-radius:3px;box-shadow:0 0 0 1px #353535"></div><div class="a" style="left:554px;top:59px;width:35px;height:34px;background:#e2e0b8;border-radius:0 3px 3px 0"></div><div class="a" style="left:517px;top:59px;width:1px;height:34px;background:#4e4e4e"></div><div class="a" style="left:553px;top:59px;width:1px;height:34px;background:#4e4e4e"></div><svg class="a" style="left:483px;top:59px" width="35" height="34" viewBox="0 0 35 34"><rect x="4" y="6" width="27" height="23" rx="3" fill="#1e1e1e"/><path d="M9 6 L11 10 M15 6 L17 10 M21 6 L23 10" stroke="#ee6a3a" stroke-width="2.2"/><rect x="8.5" y="13.5" width="18" height="11" fill="none" stroke="#d8d8d8" stroke-width="1.3"/></svg><svg class="a" style="left:517px;top:59px" width="36" height="34" viewBox="0 0 36 34"><rect x="4" y="6" width="27" height="23" rx="3" fill="#1e1e1e"/><path d="M9 6 L11 10 M15 6 L17 10 M21 6 L23 10" stroke="#ee6a3a" stroke-width="2.2"/><polygon points="14,13 24,18.5 14,24" fill="#e8e8e8"/></svg><svg class="a" style="left:547px;top:87px" width="6" height="6" viewBox="0 0 6 6"><polygon points="6,0 6,6 0,6" fill="#161616"/></svg><svg class="a" style="left:554px;top:59px" width="35" height="34" viewBox="0 0 35 34"><rect x="4" y="6" width="27" height="23" rx="3" fill="#1e1e1e"/><path d="M9 6 L11 10 M15 6 L17 10 M21 6 L23 10" stroke="#ee6a3a" stroke-width="2.2"/><g transform="translate(17.5,19)"><rect x="-1.6" y="-7" width="3.2" height="14" fill="#e8e8e8" transform="rotate(0)"/><rect x="-1.6" y="-7" width="3.2" height="14" fill="#e8e8e8" transform="rotate(45)"/><rect x="-1.6" y="-7" width="3.2" height="14" fill="#e8e8e8" transform="rotate(90)"/><rect x="-1.6" y="-7" width="3.2" height="14" fill="#e8e8e8" transform="rotate(135)"/><circle r="4.8" fill="#e8e8e8"/><circle r="2" fill="#1e1e1e"/></g></svg><div class="a" style="left:601px;top:59px;width:286px;height:34px;background:#5a5a5a;border-radius:3px;box-shadow:0 0 0 1px #353535"></div><div class="a" style="left:707px;top:59px;width:36px;height:34px;background:#dcd890;border-radius:0 0 0 0"></div><div class="a" style="left:743px;top:59px;width:36px;height:34px;background:#4a4a4a;border-radius:0 0 0 0"></div><div class="a" style="left:743px;top:59px;width:36px;height:34px;border:1px solid #d8d490"></div><div class="a" style="left:779px;top:59px;width:36px;height:34px;background:#dcd890;border-radius:0 0 0 0"></div><div class="a" style="left:635px;top:59px;width:1px;height:34px;background:#4e4e4e"></div><div class="a" style="left:671px;top:59px;width:1px;height:34px;background:#4e4e4e"></div><div class="a" style="left:707px;top:59px;width:1px;height:34px;background:#4e4e4e"></div><div class="a" style="left:743px;top:59px;width:1px;height:34px;background:#4e4e4e"></div><div class="a" style="left:779px;top:59px;width:1px;height:34px;background:#4e4e4e"></div><div class="a" style="left:815px;top:59px;width:1px;height:34px;background:#4e4e4e"></div><div class="a" style="left:851px;top:59px;width:1px;height:34px;background:#4e4e4e"></div><svg class="a" style="left:601px;top:59px" width="35" height="34" viewBox="0 0 35 34"><path d="M17.5 5 L29 10 L29 24 L17.5 30 L6 24 L6 10Z" fill="#5aa0e0" stroke="#1e1e1e" stroke-width="1.2" stroke-linejoin="round"/><path d="M6 10 L17.5 15 L29 10 L17.5 5Z" fill="#a8d4fa"/><path d="M17.5 15 L17.5 30 L6 24 L6 10Z" fill="#7ab8ee"/><path d="M6 10 L17.5 15 L29 10 M17.5 15 V30" stroke="#2a4a6a" stroke-width="0.8" fill="none"/></svg><svg class="a" style="left:629px;top:87px" width="6" height="6" viewBox="0 0 6 6"><polygon points="6,0 6,6 0,6" fill="#161616"/></svg><svg class="a" style="left:635px;top:59px" width="36" height="34" viewBox="0 0 36 34"><path d="M5 22.4 Q19 33 33 22.4" stroke="#1e1e1e" stroke-width="3.6" fill="none"/><path d="M5 22.4 Q19 33 33 22.4" stroke="#e8e8e8" stroke-width="2" fill="none"/><circle cx="19.2" cy="27.6" r="2.7" fill="#f19d38" stroke="#1e1e1e" stroke-width="0.8"/><polygon points="19.5,2.5 34,1.5 26,10.5" fill="#1a1a1a"/><path d="M9 21 L14 11.5 L19.5 6.5 L26.5 11 L23 17.5 Z" fill="#f19d38" stroke="#1e1e1e" stroke-width="1.2" stroke-linejoin="round"/><path d="M9.5 20.5 L17.5 13.5" stroke="#1e1e1e" stroke-width="1"/><circle cx="18" cy="13" r="1.2" fill="#1e1e1e"/></svg><svg class="a" style="left:665px;top:87px" width="6" height="6" viewBox="0 0 6 6"><polygon points="6,0 6,6 0,6" fill="#161616"/></svg><svg class="a" style="left:671px;top:59px" width="36" height="34" viewBox="0 0 36 34"><path d="M7 10.5 L21 6 L30.5 10 L30 24 L16 29 L6.5 24.5Z M7 10.5 L16 14.5 L30.5 10 M16 14.5 L16 29" fill="none" stroke="#1e1e1e" stroke-width="1.6"/><rect x="10.5" y="11" width="15" height="15" rx="5" fill="#3ed08a" stroke="#1e1e1e" stroke-width="1"/><path d="M12 13 Q18 10.5 24 13" stroke="#8ef0c0" stroke-width="1.5" fill="none"/><circle cx="7" cy="10.5" r="1.4" fill="#f4f4f4"/><circle cx="21" cy="6" r="1.4" fill="#f4f4f4"/><circle cx="30.5" cy="10" r="1.4" fill="#f4f4f4"/><circle cx="30" cy="24" r="1.4" fill="#f4f4f4"/><circle cx="16" cy="29" r="1.4" fill="#f4f4f4"/><circle cx="6.5" cy="24.5" r="1.4" fill="#f4f4f4"/><circle cx="16" cy="14.5" r="1.4" fill="#f4f4f4"/></svg><svg class="a" style="left:701px;top:87px" width="6" height="6" viewBox="0 0 6 6"><polygon points="6,0 6,6 0,6" fill="#161616"/></svg><svg class="a" style="left:707px;top:59px" width="36" height="34" viewBox="0 0 36 34"><path d="M8 12.3 L12.5 5.7 L29.3 8.7 L29.3 20.8 L22.8 28.4 L8 28.4Z" fill="#3ed08a" stroke="#1e1e1e" stroke-width="1.2" stroke-linejoin="round"/><path d="M8 12.3 L22.8 12.3 L29.3 8.7 M22.8 12.3 V28.4" stroke="#1e1e1e" stroke-width="0.9" fill="none"/><path d="M8 12.3 L12.5 5.7 L29.3 8.7 L22.8 12.3Z" fill="#7af0b8"/><path d="M22.8 12.3 L29.3 8.7 L29.3 20.8 L22.8 28.4Z" fill="#30b878"/><rect x="9.5" y="13.8" width="11.8" height="13.1" fill="none" stroke="#f4f4f4" stroke-width="2.4"/><path d="M12 16 L18.5 16 L18.5 20 L15 20 Z" fill="#2a5a40"/></svg><svg class="a" style="left:737px;top:87px" width="6" height="6" viewBox="0 0 6 6"><polygon points="6,0 6,6 0,6" fill="#161616"/></svg><svg class="a" style="left:743px;top:59px" width="36" height="34" viewBox="0 0 36 34"><path d="M18 6 L29 11 L29 23 L18 29 L7 23 L7 11Z" fill="#c8c8c8" stroke="#1e1e1e" stroke-width="1.2"/><path d="M7 11 L18 16 L29 11 M18 16 V29" stroke="#888" stroke-width="1" fill="none"/><circle cx="18" cy="6" r="2.6" fill="#3ed08a" stroke="#1e1e1e" stroke-width="0.7"/><circle cx="29" cy="11" r="2.6" fill="#3ed08a" stroke="#1e1e1e" stroke-width="0.7"/><circle cx="29" cy="23" r="2.6" fill="#3ed08a" stroke="#1e1e1e" stroke-width="0.7"/><circle cx="18" cy="29" r="2.6" fill="#3ed08a" stroke="#1e1e1e" stroke-width="0.7"/><circle cx="7" cy="23" r="2.6" fill="#3ed08a" stroke="#1e1e1e" stroke-width="0.7"/><circle cx="7" cy="11" r="2.6" fill="#3ed08a" stroke="#1e1e1e" stroke-width="0.7"/><circle cx="18" cy="16" r="2.6" fill="#3ed08a" stroke="#1e1e1e" stroke-width="0.7"/></svg><svg class="a" style="left:773px;top:87px" width="6" height="6" viewBox="0 0 6 6"><polygon points="6,0 6,6 0,6" fill="#161616"/></svg><svg class="a" style="left:779px;top:59px" width="36" height="34" viewBox="0 0 36 34"><path d="M10 8 L17 4.85 L24 8 L24 16.4 L17 19.549999999999997 L10 16.4Z" fill="#3ed08a" stroke="#1e1e1e" stroke-width="1"/><path d="M10 8 L17 11.15 L24 8 M17 11.15 V19.549999999999997" stroke="#1e1e1e" stroke-width="0.7" fill="none"/><path d="M10 8 L17 4.85 L24 8 L17 11.15Z" fill="#8ef0c0"/><path d="M4 18 L11 14.85 L18 18 L18 26.4 L11 29.549999999999997 L4 26.4Z" fill="#3ed08a" stroke="#1e1e1e" stroke-width="1"/><path d="M4 18 L11 21.15 L18 18 M11 21.15 V29.549999999999997" stroke="#1e1e1e" stroke-width="0.7" fill="none"/><path d="M4 18 L11 14.85 L18 18 L11 21.15Z" fill="#8ef0c0"/><path d="M17 18 L24 14.85 L31 18 L31 26.4 L24 29.549999999999997 L17 26.4Z" fill="#3ed08a" stroke="#1e1e1e" stroke-width="1"/><path d="M17 18 L24 21.15 L31 18 M24 21.15 V29.549999999999997" stroke="#1e1e1e" stroke-width="0.7" fill="none"/><path d="M17 18 L24 14.85 L31 18 L24 21.15Z" fill="#8ef0c0"/></svg><svg class="a" style="left:809px;top:87px" width="6" height="6" viewBox="0 0 6 6"><polygon points="6,0 6,6 0,6" fill="#161616"/></svg><svg class="a" style="left:815px;top:59px" width="36" height="34" viewBox="0 0 36 34"><rect x="8" y="6" width="4" height="23" rx="2" fill="#c060e0" stroke="#1e1e1e" stroke-width="1"/><rect x="25" y="6" width="4" height="23" rx="2" fill="#c060e0" stroke="#1e1e1e" stroke-width="1"/><path d="M13 15.5 L19 15.5 L19 12 L24 17.5 L19 23 L19 19.5 L13 19.5Z" fill="#e8e8e8" stroke="#1e1e1e" stroke-width="0.8"/></svg><svg class="a" style="left:845px;top:87px" width="6" height="6" viewBox="0 0 6 6"><polygon points="6,0 6,6 0,6" fill="#161616"/></svg><svg class="a" style="left:851px;top:59px" width="36" height="34" viewBox="0 0 36 34"><path d="M9.4 11.5 Q10.5 6.5 15 6.8 Q25.5 10 28.6 25.2 L21 29.4 Q18.5 21 11.2 18.8 Q8.6 16.5 9.4 11.5Z" fill="#8c9ee6" stroke="#1e1e1e" stroke-width="1.2" stroke-linejoin="round"/><path d="M11.2 18.8 Q11 12 14 8 M11.2 18.8 Q18.5 21 21 29.4" stroke="#4a5aa0" stroke-width="0.9" fill="none"/><path d="M14.5 8 Q24 11 27.5 24" stroke="#aab8f4" stroke-width="1.2" fill="none"/></svg><svg class="a" style="left:881px;top:87px" width="6" height="6" viewBox="0 0 6 6"><polygon points="6,0 6,6 0,6" fill="#161616"/></svg><div class="a" style="left:891px;top:59px;width:106px;height:34px;background:#5a5a5a;border-radius:3px;box-shadow:0 0 0 1px #353535"></div><div class="a" style="left:925px;top:59px;width:1px;height:34px;background:#4e4e4e"></div><div class="a" style="left:961px;top:59px;width:1px;height:34px;background:#4e4e4e"></div><svg class="a" style="left:891px;top:59px" width="35" height="34" viewBox="0 0 35 34"><path d="M2 10 L33 10 L33 34 L2 34Z" fill="#bcdcfa"/><path d="M2 10 H33 M2 15.5 H33 M2 23 H33 M2 10 L2 34 M11 10 L3 24 M17.5 10 V34 M24 10 L32 24" stroke="#40607c" stroke-width="1.3" fill="none"/></svg><svg class="a" style="left:919px;top:87px" width="6" height="6" viewBox="0 0 6 6"><polygon points="6,0 6,6 0,6" fill="#161616"/></svg><svg class="a" style="left:925px;top:59px" width="36" height="34" viewBox="0 0 36 34"><circle cx="11" cy="11" r="5" fill="#d8e4f4" stroke="#1e1e1e" stroke-width="2.4"/><circle cx="21" cy="10" r="5" fill="#d8e4f4" stroke="#1e1e1e" stroke-width="2.4"/><circle cx="11" cy="11" r="1.6" fill="#1e1e1e"/><circle cx="21" cy="10" r="1.6" fill="#1e1e1e"/><rect x="6" y="16" width="18" height="10" rx="2" fill="#1e1e1e"/><rect x="9" y="19" width="4" height="4" fill="#d8e4f4"/><polygon points="23,20 31,16 31,27 23,23" fill="#1e1e1e"/></svg><svg class="a" style="left:955px;top:87px" width="6" height="6" viewBox="0 0 6 6"><polygon points="6,0 6,6 0,6" fill="#161616"/></svg><svg class="a" style="left:961px;top:59px" width="36" height="34" viewBox="0 0 36 34"><defs><radialGradient id="bulb" cx="0.4" cy="0.35" r="0.6"><stop offset="0" stop-color="#ffffff"/><stop offset="1" stop-color="#9a9a9a"/></radialGradient></defs><circle cx="18" cy="14" r="10" fill="#777" opacity="0.25"/><path d="M18 5 C25 5 27 11 25 15 C23.5 18 22 20 22 23 L14 23 C14 20 12.5 18 11 15 C9 11 11 5 18 5Z" fill="url(#bulb)" stroke="#222" stroke-width="1"/><rect x="14" y="23.5" width="8" height="2" fill="#bbb"/><rect x="14.5" y="26" width="7" height="2" fill="#999"/><rect x="15.5" y="28.5" width="5" height="1.5" fill="#888"/></svg><svg class="a" style="left:991px;top:87px" width="6" height="6" viewBox="0 0 6 6"><polygon points="6,0 6,6 0,6" fill="#161616"/></svg>
<svg class="a" style="left:12px;top:98px" width="30" height="6" viewBox="0 0 30 6"><rect x="0" y="0" width="1" height="1" fill="#6a6a6a"/><rect x="0" y="3" width="1" height="1" fill="#6a6a6a"/><rect x="3" y="0" width="1" height="1" fill="#6a6a6a"/><rect x="3" y="3" width="1" height="1" fill="#6a6a6a"/><rect x="6" y="0" width="1" height="1" fill="#6a6a6a"/><rect x="6" y="3" width="1" height="1" fill="#6a6a6a"/><rect x="9" y="0" width="1" height="1" fill="#6a6a6a"/><rect x="9" y="3" width="1" height="1" fill="#6a6a6a"/><rect x="12" y="0" width="1" height="1" fill="#6a6a6a"/><rect x="12" y="3" width="1" height="1" fill="#6a6a6a"/><rect x="15" y="0" width="1" height="1" fill="#6a6a6a"/><rect x="15" y="3" width="1" height="1" fill="#6a6a6a"/><rect x="18" y="0" width="1" height="1" fill="#6a6a6a"/><rect x="18" y="3" width="1" height="1" fill="#6a6a6a"/><rect x="21" y="0" width="1" height="1" fill="#6a6a6a"/><rect x="21" y="3" width="1" height="1" fill="#6a6a6a"/><rect x="24" y="0" width="1" height="1" fill="#6a6a6a"/><rect x="24" y="3" width="1" height="1" fill="#6a6a6a"/><rect x="27" y="0" width="1" height="1" fill="#6a6a6a"/><rect x="27" y="3" width="1" height="1" fill="#6a6a6a"/></svg><div class="a" style="left:9px;top:106px;width:34px;height:34px;background:#5a5a5a;border-radius:3px;box-shadow:0 0 0 1px #353535"></div><svg class="a" style="left:9px;top:106px" width="34" height="34" viewBox="0 0 34 34"><path d="M3.5 6.5 L11.5 3 L19.5 6.5 L19.5 14.5 L11.5 18 L3.5 14.5Z" fill="#ececec" stroke="#222" stroke-width="1.1" stroke-linejoin="round"/><path d="M3.5 6.5 L11.5 10 L19.5 6.5 M11.5 10 V18" stroke="#9a9a9a" stroke-width="0.9" fill="none"/><path d="M5.5 16 V25 L2.5 25 L8 31.5 L13.5 25 L10.5 25 V16Z" fill="#f0f0f0" stroke="#222" stroke-width="1.1" stroke-linejoin="round"/><path d="M15 18 L23 14 L31.5 18 L31.5 27.5 L23 31.5 L15 27.5Z" fill="#5a5a5a" stroke="#1a1a1a" stroke-width="1.3" stroke-linejoin="round"/><path d="M15 18 L23 22 L31.5 18 L23 14Z" fill="#ee6a3a"/><path d="M15 18 L23 22 L23 31.5 L15 27.5Z" fill="#8a8a8a"/><path d="M15 18 L23 22 L31.5 18 M23 22 V31.5" stroke="#1a1a1a" stroke-width="0.9" fill="none"/></svg><svg class="a" style="left:37px;top:134px" width="6" height="6" viewBox="0 0 6 6"><polygon points="6,0 6,6 0,6" fill="#161616"/></svg><div class="a" style="left:9px;top:152px;width:34px;height:70px;background:#5a5a5a;border-radius:3px;box-shadow:0 0 0 1px #353535"></div><div class="a" style="left:9px;top:152px;width:34px;height:34px;background:#8aa6d4;border-radius:3px 3px 0 0"></div><svg class="a" style="left:9px;top:152px" width="34" height="34" viewBox="0 0 34 34"><g transform="translate(17 17.5) scale(1.1) translate(-17 -17.5)"><path d="M17 6 L27 11 L27 23 L17 29 L7 23 L7 11Z" fill="#565656" stroke="#1a1a1a" stroke-width="1.3" stroke-linejoin="round"/><path d="M7 11 L17 16 L17 29 L7 23Z" fill="#7e7e7e"/><path d="M17 6 L27 11 L17 16 L7 11Z" fill="#6c6c6c"/><path d="M7 11 L17 16 L27 11 M17 16 V29" stroke="#1a1a1a" stroke-width="1" fill="none"/><path d="M17 5 L28 10.5 L28 23.5 L17 30 L6 23.5 L6 10.5Z" fill="none" stroke="#f19d38" stroke-width="1.8" stroke-linejoin="round"/></g></svg><svg class="a" style="left:37px;top:180px" width="6" height="6" viewBox="0 0 6 6"><polygon points="6,0 6,6 0,6" fill="#161616"/></svg><svg class="a" style="left:9px;top:186px" width="34" height="36" viewBox="0 0 34 36"><defs><clipPath id="tface"><path d="M17 17 L27 12 L27 24 L17 30Z"/></clipPath></defs><path d="M17 7 L27 12 L27 24 L17 30 L7 24 L7 12Z" fill="#5e5e5e" stroke="#1a1a1a" stroke-width="1.4" stroke-linejoin="round"/><path d="M7 12 L17 17 L17 30 L7 24Z" fill="#8a8a8a"/><path d="M17 17 L27 12 L27 24 L17 30Z" fill="#f0f0f0"/><g clip-path="url(#tface)"><g transform="translate(0 0) skewY(-26.6)"><rect x="17.0" y="17" width="3.33" height="4" fill="#111"/><rect x="17.0" y="25" width="3.33" height="4" fill="#111"/><rect x="17.0" y="33" width="3.33" height="4" fill="#111"/><rect x="17.0" y="41" width="3.33" height="4" fill="#111"/><rect x="20.33" y="21" width="3.33" height="4" fill="#111"/><rect x="20.33" y="29" width="3.33" height="4" fill="#111"/><rect x="20.33" y="37" width="3.33" height="4" fill="#111"/><rect x="20.33" y="45" width="3.33" height="4" fill="#111"/><rect x="23.66" y="17" width="3.33" height="4" fill="#111"/><rect x="23.66" y="25" width="3.33" height="4" fill="#111"/><rect x="23.66" y="33" width="3.33" height="4" fill="#111"/><rect x="23.66" y="41" width="3.33" height="4" fill="#111"/></g></g><path d="M17 17 L27 12 L27 24 L17 30Z" fill="none" stroke="#f19d38" stroke-width="1.6" stroke-linejoin="round"/></svg><div class="a" style="left:9px;top:226px;width:34px;height:106px;background:#5a5a5a;border-radius:3px;box-shadow:0 0 0 1px #353535"></div><div class="a" style="left:9px;top:260px;width:34px;height:1px;background:#4e4e4e"></div><div class="a" style="left:9px;top:296px;width:34px;height:1px;background:#4e4e4e"></div><svg class="a" style="left:9px;top:226px" width="34" height="34" viewBox="0 0 34 34"><g transform="translate(17 17.5) scale(1.1) translate(-17 -17.5)"><path d="M17 6 L27 11 L27 23 L17 29 L7 23 L7 11Z" fill="#565656" stroke="#1a1a1a" stroke-width="1.3" stroke-linejoin="round"/><path d="M7 11 L17 16 L17 29 L7 23Z" fill="#7e7e7e"/><path d="M17 6 L27 11 L17 16 L7 11Z" fill="#6c6c6c"/><path d="M7 11 L17 16 L27 11 M17 16 V29" stroke="#1a1a1a" stroke-width="1" fill="none"/><circle cx="17" cy="16" r="2.8" fill="#f19d38" stroke="#1a1a1a" stroke-width="0.8"/><circle cx="27" cy="11" r="2.8" fill="#f19d38" stroke="#1a1a1a" stroke-width="0.8"/></g></svg><svg class="a" style="left:9px;top:260px" width="34" height="36" viewBox="0 0 34 36"><g transform="translate(17 17.5) scale(1.1) translate(-17 -17.5)"><path d="M17 6 L27 11 L27 23 L17 29 L7 23 L7 11Z" fill="#565656" stroke="#1a1a1a" stroke-width="1.3" stroke-linejoin="round"/><path d="M7 11 L17 16 L17 29 L7 23Z" fill="#7e7e7e"/><path d="M17 6 L27 11 L17 16 L7 11Z" fill="#6c6c6c"/><path d="M7 11 L17 16 L27 11 M17 16 V29" stroke="#1a1a1a" stroke-width="1" fill="none"/><path d="M7 11 L17 7" stroke="#f19d38" stroke-width="2"/><path d="M17 16 L27 11" stroke="#f19d38" stroke-width="2"/></g></svg><svg class="a" style="left:9px;top:296px" width="34" height="36" viewBox="0 0 34 36"><g transform="translate(17 17.5) scale(1.1) translate(-17 -17.5)"><path d="M17 6 L27 11 L27 23 L17 29 L7 23 L7 11Z" fill="#565656" stroke="#1a1a1a" stroke-width="1.3" stroke-linejoin="round"/><path d="M7 11 L17 16 L17 29 L7 23Z" fill="#7e7e7e"/><path d="M17 6 L27 11 L17 16 L7 11Z" fill="#f19d38"/><path d="M7 11 L17 16 L27 11 M17 16 V29" stroke="#1a1a1a" stroke-width="1" fill="none"/></g></svg><div class="a" style="left:9px;top:336px;width:34px;height:34px;background:#5a5a5a;border-radius:3px;box-shadow:0 0 0 1px #353535"></div><svg class="a" style="left:9px;top:336px" width="34" height="34" viewBox="0 0 34 34"><path d="M10 8 V26 H27" stroke="#1c1c1c" stroke-width="4.2" fill="none"/><path d="M10 8 V26 H27" stroke="#f19d38" stroke-width="2.4" fill="none"/><polygon points="6.5,10 10,4 13.5,10" fill="#f19d38" stroke="#1c1c1c" stroke-width="0.8"/><polygon points="25,22.5 31,26 25,29.5" fill="#f19d38" stroke="#1c1c1c" stroke-width="0.8"/></svg><div class="a" style="left:9px;top:382px;width:34px;height:106px;background:#5a5a5a;border-radius:3px;box-shadow:0 0 0 1px #353535"></div><div class="a" style="left:9px;top:382px;width:34px;height:34px;background:#8aa6d4;border-radius:3px 3px 0 0"></div><div class="a" style="left:9px;top:416px;width:34px;height:1px;background:#4e4e4e"></div><div class="a" style="left:9px;top:452px;width:34px;height:1px;background:#4e4e4e"></div><svg class="a" style="left:9px;top:382px" width="34" height="34" viewBox="0 0 34 34"><circle cx="17" cy="17" r="12" fill="#8a8a8a" stroke="#3a3a3a" stroke-width="1.4"/><path d="M17 5 V29 M5 17 H29" stroke="#00000033" stroke-width="0.8"/><text x="17" y="23" text-anchor="middle" font-family="Liberation Sans" font-size="17" style="font-weight:700" fill="#111" stroke="#111" stroke-width="0.8">S</text></svg><svg class="a" style="left:9px;top:417px" width="34" height="34" viewBox="0 0 34 34"><circle cx="17" cy="17" r="12" fill="#f19d38" stroke="#3a3a3a" stroke-width="1.4"/><path d="M17 5 V29 M5 17 H29" stroke="#00000033" stroke-width="0.8"/><text x="17" y="23" text-anchor="middle" font-family="Liberation Sans" font-size="17" style="font-weight:700" fill="#111" stroke="#111" stroke-width="0.8">S</text></svg><svg class="a" style="left:37px;top:445px" width="6" height="6" viewBox="0 0 6 6"><polygon points="6,0 6,6 0,6" fill="#161616"/></svg><svg class="a" style="left:9px;top:453px" width="34" height="34" viewBox="0 0 34 34"><circle cx="17" cy="17" r="12" fill="#ececec" stroke="#ee6a3a" stroke-width="1.4"/><path d="M17 5 V29 M5 17 H29" stroke="#00000033" stroke-width="0.8"/><text x="17" y="23" text-anchor="middle" font-family="Liberation Sans" font-size="17" style="font-weight:700" fill="#111" stroke="#111" stroke-width="0.8">S</text></svg><div class="a" style="left:9px;top:500px;width:34px;height:34px;background:#5a5a5a;border-radius:3px;box-shadow:0 0 0 1px #353535"></div><svg class="a" style="left:9px;top:500px" width="34" height="34" viewBox="0 0 34 34"><g transform="rotate(-45 17 17)"><path d="M10.5 4 V17 A6.5 6.5 0 0 0 23.5 17 V4" stroke="#1a1a1a" stroke-width="8.4" fill="none"/><path d="M10.5 8 V17 A6.5 6.5 0 0 0 23.5 17 V8" stroke="#f19d38" stroke-width="5.6" fill="none"/><rect x="7.7" y="3.5" width="5.6" height="4.5" fill="#1a1a1a"/><rect x="20.7" y="3.5" width="5.6" height="4.5" fill="#1a1a1a"/></g></svg><svg class="a" style="left:37px;top:528px" width="6" height="6" viewBox="0 0 6 6"><polygon points="6,0 6,6 0,6" fill="#161616"/></svg><div class="a" style="left:9px;top:546px;width:34px;height:106px;background:#5a5a5a;border-radius:3px;box-shadow:0 0 0 1px #353535"></div><div class="a" style="left:9px;top:581px;width:34px;height:35px;background:#8aa6d4"></div><svg class="a" style="left:9px;top:546px" width="34" height="34" viewBox="0 0 34 34"><path d="M17 8 L31 17 L17 26 L3 17Z" fill="#f19d38" stroke="#3a2a10" stroke-width="1.6" stroke-linejoin="round"/><path d="M20.5 10.25 L6.5 19.25 M13.5 10.25 L27.5 19.25" stroke="#3a2a10" stroke-width="1.3"/><path d="M24.0 12.5 L10.0 21.5 M10.0 12.5 L24.0 21.5" stroke="#3a2a10" stroke-width="1.3"/><path d="M27.5 14.75 L13.5 23.75 M6.5 14.75 L20.5 23.75" stroke="#3a2a10" stroke-width="1.3"/></svg><svg class="a" style="left:9px;top:581px" width="34" height="35" viewBox="0 0 34 35"><g transform="translate(0 -4)"><path d="M17 8 L31 17 L17 26 L3 17Z" fill="#8aa6d4" stroke="#1a1a1a" stroke-width="1.6" stroke-linejoin="round"/><path d="M20.5 10.25 L6.5 19.25 M13.5 10.25 L27.5 19.25" stroke="#1a1a1a" stroke-width="1.3"/><path d="M24.0 12.5 L10.0 21.5 M10.0 12.5 L24.0 21.5" stroke="#1a1a1a" stroke-width="1.3"/><path d="M27.5 14.75 L13.5 23.75 M6.5 14.75 L20.5 23.75" stroke="#1a1a1a" stroke-width="1.3"/></g><rect x="2.5" y="24" width="10.5" height="9" rx="1.2" fill="#111"/><path d="M4.8 24 V20.5 A3 3 0 0 1 10.8 20.5 V24" stroke="#111" stroke-width="1.8" fill="none"/><circle cx="7.75" cy="28.5" r="1.3" fill="#8aa6d4"/></svg><svg class="a" style="left:37px;top:610px" width="6" height="6" viewBox="0 0 6 6"><polygon points="6,0 6,6 0,6" fill="#161616"/></svg><svg class="a" style="left:9px;top:616px" width="34" height="35" viewBox="0 0 34 35"><g transform="translate(0 -5)"><path d="M17 8 L31 17 L17 26 L3 17Z" fill="#5a5a5a" stroke="#1a1a1a" stroke-width="1.6" stroke-linejoin="round"/><path d="M20.5 10.25 L6.5 19.25 M13.5 10.25 L27.5 19.25" stroke="#1a1a1a" stroke-width="1.3"/><path d="M24.0 12.5 L10.0 21.5 M10.0 12.5 L24.0 21.5" stroke="#1a1a1a" stroke-width="1.3"/><path d="M27.5 14.75 L13.5 23.75 M6.5 14.75 L20.5 23.75" stroke="#1a1a1a" stroke-width="1.3"/></g><path d="M18.5 28 A6.2 6.2 0 0 1 24 19.5" stroke="#1a1a1a" stroke-width="4.2" fill="none"/><path d="M30 23.5 A6.2 6.2 0 0 1 24.5 32" stroke="#1a1a1a" stroke-width="4.2" fill="none"/><path d="M18.5 28 A6.2 6.2 0 0 1 24 19.5" stroke="#f19d38" stroke-width="2.6" fill="none"/><path d="M30 23.5 A6.2 6.2 0 0 1 24.5 32" stroke="#f19d38" stroke-width="2.6" fill="none"/></svg><svg class="a" style="left:37px;top:645px" width="6" height="6" viewBox="0 0 6 6"><polygon points="6,0 6,6 0,6" fill="#161616"/></svg>
<svg class="a" style="left:54px;top:103px" width="15" height="11" viewBox="0 0 15 11"><rect x="0" y="0.5" width="14.5" height="2" fill="#e0e0e0"/><rect x="0" y="4.5" width="14.5" height="2" fill="#e0e0e0"/><rect x="0" y="8.5" width="14.5" height="2" fill="#e0e0e0"/></svg><div class="t" style="left:78px;top:102px;font-size:12px;color:#d6d6d6"><span class="c">查看</span></div><div class="t" style="left:114px;top:102px;font-size:12px;color:#d6d6d6"><span class="c">摄像机</span></div><div class="t" style="left:161px;top:102px;font-size:12px;color:#d6d6d6"><span class="c">显示</span></div><div class="t" style="left:196px;top:102px;font-size:12px;color:#dcd88e"><span class="c">选项</span></div><div class="t" style="left:232px;top:102px;font-size:12px;color:#d6d6d6"><span class="c">过滤</span></div><div class="t" style="left:268px;top:102px;font-size:12px;color:#d6d6d6"><span class="c">面板</span></div><div class="t" style="left:305px;top:102px;font-size:12px;color:#d6d6d6">ProRender</div><svg class="a" style="left:1032px;top:101px" width="18" height="17" viewBox="0 0 18 17"><g fill="#8a8a8a"><polygon points="8.5,1 13,5.5 4,5.5"/><polygon points="8.5,16 13,11.5 4,11.5"/><polygon points="1,8.5 5.5,4 5.5,13"/><polygon points="16,8.5 11.5,4 11.5,13"/><rect x="6.5" y="6.5" width="4" height="4" transform="rotate(45 8.5 8.5)"/></g></svg><svg class="a" style="left:1053px;top:101px" width="16" height="17" viewBox="0 0 16 17"><polygon points="8,1 13.5,7 9.5,7 9.5,11 6.5,11 6.5,7 2.5,7" fill="#8a8a8a"/><polygon points="1.5,11 14.5,11 8,16" fill="none" stroke="#8a8a8a" stroke-width="1.3" stroke-linejoin="round"/></svg><svg class="a" style="left:1073px;top:101px" width="16" height="17" viewBox="0 0 16 17"><path d="M4 13 A6.5 6.5 0 0 1 8 2.5" stroke="#8a8a8a" stroke-width="1.8" fill="none"/><path d="M12 4 A6.5 6.5 0 0 1 8 14.5" stroke="#8a8a8a" stroke-width="1.8" fill="none"/><polygon points="7,0 11,3 7,5.5" fill="#8a8a8a"/><polygon points="9,17 5,14 9,11.5" fill="#8a8a8a"/></svg><svg class="a" style="left:1093px;top:102px" width="15" height="15" viewBox="0 0 15 15"><rect x="0.8" y="0.8" width="13.4" height="13.4" fill="none" stroke="#8a8a8a" stroke-width="1.5"/><path d="M0.8 6.5 H8.5 V14" stroke="#8a8a8a" stroke-width="1.5" fill="none"/></svg><div class="a" style="left:51px;top:123px;width:49px;height:18px;background:#353535;border-radius:2px"></div><div class="t" style="left:53px;top:126px;font-size:11.5px;color:#ececec"><span class="c">透视视图</span></div><div class="a" style="left:539px;top:123px;width:78px;height:18px;background:#353535;border-radius:2px"></div><div class="t" style="left:541px;top:126.5px;font-size:11px;color:#ececec"><span class="c">默认摄像机</span></div><svg class="a" style="left:597px;top:125px" width="18" height="14" viewBox="0 0 18 14"><circle cx="5" cy="4.5" r="2.9" fill="#1a1a1a" stroke="#b8d8f8" stroke-width="1.5"/><circle cx="11" cy="3.6" r="3.1" fill="#1a1a1a" stroke="#b8d8f8" stroke-width="1.6"/><rect x="3" y="7.8" width="10" height="5.2" rx="0.8" fill="#111"/><rect x="3.6" y="9.3" width="3" height="2.6" fill="#b8d8f8"/><polygon points="12.5,10.3 17,8 17,13 12.5,11.5" fill="#111"/></svg><div class="a" style="left:1010px;top:1102px;width:98px;height:19px;background:#2a2a2a"></div><div class="t" style="left:1014px;top:1105px;font-size:11px;color:#e8e8e8"><span class="c">网格间距</span> : 100 cm</div><svg class="a" style="left:75px;top:1045px" width="45" height="50" viewBox="0 0 45 50"><path d="M10.5 24 V42" stroke="#33dd77" stroke-width="1.1"/><path d="M10.5 41.9 L28 42.4" stroke="#ee4444" stroke-width="1.1"/><path d="M10.7 41.6 L14.8 38.3" stroke="#3388ee" stroke-width="1.1"/><g font-family="Liberation Sans" font-size="10.5"><text x="6.6" y="19" fill="#33dd77">Y</text><text x="19" y="37.1" fill="#3388ee">Z</text><text x="32.9" y="46" fill="#ee4444">X</text></g></svg>
<svg class="a" style="left:48px;top:1132px" width="6" height="18" viewBox="0 0 6 18"><rect x="0" y="0" width="1" height="1" fill="#6a6a6a"/><rect x="0" y="3" width="1" height="1" fill="#6a6a6a"/><rect x="0" y="6" width="1" height="1" fill="#6a6a6a"/><rect x="0" y="9" width="1" height="1" fill="#6a6a6a"/><rect x="0" y="12" width="1" height="1" fill="#6a6a6a"/><rect x="0" y="15" width="1" height="1" fill="#6a6a6a"/><rect x="3" y="0" width="1" height="1" fill="#6a6a6a"/><rect x="3" y="3" width="1" height="1" fill="#6a6a6a"/><rect x="3" y="6" width="1" height="1" fill="#6a6a6a"/><rect x="3" y="9" width="1" height="1" fill="#6a6a6a"/><rect x="3" y="12" width="1" height="1" fill="#6a6a6a"/><rect x="3" y="15" width="1" height="1" fill="#6a6a6a"/></svg><svg class="a" style="left:0px;top:0px" width="1512" height="1368" viewBox="0 0 1512 1368"><rect x="55" y="1145" width="972" height="1" fill="#8a8a8a"/><rect x="61.9" y="1146" width="1" height="5" fill="#9a9a9a"/><rect x="72.6" y="1147.5" width="1" height="2" fill="#9a9a9a"/><rect x="83.2" y="1147.5" width="1" height="2" fill="#9a9a9a"/><rect x="93.9" y="1147.5" width="1" height="2" fill="#9a9a9a"/><rect x="104.6" y="1147.5" width="1" height="2" fill="#9a9a9a"/><rect x="115.3" y="1146" width="1" height="5" fill="#9a9a9a"/><rect x="125.9" y="1147.5" width="1" height="2" fill="#9a9a9a"/><rect x="136.6" y="1147.5" width="1" height="2" fill="#9a9a9a"/><rect x="147.3" y="1147.5" width="1" height="2" fill="#9a9a9a"/><rect x="157.9" y="1147.5" width="1" height="2" fill="#9a9a9a"/><rect x="168.6" y="1146" width="1" height="5" fill="#9a9a9a"/><rect x="179.3" y="1147.5" width="1" height="2" fill="#9a9a9a"/><rect x="190.0" y="1147.5" width="1" height="2" fill="#9a9a9a"/><rect x="200.6" y="1147.5" width="1" height="2" fill="#9a9a9a"/><rect x="211.3" y="1147.5" width="1" height="2" fill="#9a9a9a"/><rect x="222.0" y="1146" width="1" height="5" fill="#9a9a9a"/><rect x="232.6" y="1147.5" width="1" height="2" fill="#9a9a9a"/><rect x="243.3" y="1147.5" width="1" height="2" fill="#9a9a9a"/><rect x="254.0" y="1147.5" width="1" height="2" fill="#9a9a9a"/><rect x="264.7" y="1147.5" width="1" height="2" fill="#9a9a9a"/><rect x="275.3" y="1146" width="1" height="5" fill="#9a9a9a"/><rect x="286.0" y="1147.5" width="1" height="2" fill="#9a9a9a"/><rect x="296.7" y="1147.5" width="1" height="2" fill="#9a9a9a"/><rect x="307.3" y="1147.5" width="1" height="2" fill="#9a9a9a"/><rect x="318.0" y="1147.5" width="1" height="2" fill="#9a9a9a"/><rect x="328.7" y="1146" width="1" height="5" fill="#9a9a9a"/><rect x="339.3" y="1147.5" width="1" height="2" fill="#9a9a9a"/><rect x="350.0" y="1147.5" width="1" height="2" fill="#9a9a9a"/><rect x="360.7" y="1147.5" width="1" height="2" fill="#9a9a9a"/><rect x="371.4" y="1147.5" width="1" height="2" fill="#9a9a9a"/><rect x="382.0" y="1146" width="1" height="5" fill="#9a9a9a"/><rect x="392.7" y="1147.5" width="1" height="2" fill="#9a9a9a"/><rect x="403.4" y="1147.5" width="1" height="2" fill="#9a9a9a"/><rect x="414.0" y="1147.5" width="1" height="2" fill="#9a9a9a"/><rect x="424.7" y="1147.5" width="1" height="2" fill="#9a9a9a"/><rect x="435.4" y="1146" width="1" height="5" fill="#9a9a9a"/><rect x="446.1" y="1147.5" width="1" height="2" fill="#9a9a9a"/><rect x="456.7" y="1147.5" width="1" height="2" fill="#9a9a9a"/><rect x="467.4" y="1147.5" width="1" height="2" fill="#9a9a9a"/><rect x="478.1" y="1147.5" width="1" height="2" fill="#9a9a9a"/><rect x="488.7" y="1146" width="1" height="5" fill="#9a9a9a"/><rect x="499.4" y="1147.5" width="1" height="2" fill="#9a9a9a"/><rect x="510.1" y="1147.5" width="1" height="2" fill="#9a9a9a"/><rect x="520.8" y="1147.5" width="1" height="2" fill="#9a9a9a"/><rect x="531.4" y="1147.5" width="1" height="2" fill="#9a9a9a"/><rect x="542.1" y="1146" width="1" height="5" fill="#9a9a9a"/><rect x="552.8" y="1147.5" width="1" height="2" fill="#9a9a9a"/><rect x="563.4" y="1147.5" width="1" height="2" fill="#9a9a9a"/><rect x="574.1" y="1147.5" width="1" height="2" fill="#9a9a9a"/><rect x="584.8" y="1147.5" width="1" height="2" fill="#9a9a9a"/><rect x="595.5" y="1146" width="1" height="5" fill="#9a9a9a"/><rect x="606.1" y="1147.5" width="1" height="2" fill="#9a9a9a"/><rect x="616.8" y="1147.5" width="1" height="2" fill="#9a9a9a"/><rect x="627.5" y="1147.5" width="1" height="2" fill="#9a9a9a"/><rect x="638.1" y="1147.5" width="1" height="2" fill="#9a9a9a"/><rect x="648.8" y="1146" width="1" height="5" fill="#9a9a9a"/><rect x="659.5" y="1147.5" width="1" height="2" fill="#9a9a9a"/><rect x="670.2" y="1147.5" width="1" height="2" fill="#9a9a9a"/><rect x="680.8" y="1147.5" width="1" height="2" fill="#9a9a9a"/><rect x="691.5" y="1147.5" width="1" height="2" fill="#9a9a9a"/><rect x="702.2" y="1146" width="1" height="5" fill="#9a9a9a"/><rect x="712.8" y="1147.5" width="1" height="2" fill="#9a9a9a"/><rect x="723.5" y="1147.5" width="1" height="2" fill="#9a9a9a"/><rect x="734.2" y="1147.5" width="1" height="2" fill="#9a9a9a"/><rect x="744.9" y="1147.5" width="1" height="2" fill="#9a9a9a"/><rect x="755.5" y="1146" width="1" height="5" fill="#9a9a9a"/><rect x="766.2" y="1147.5" width="1" height="2" fill="#9a9a9a"/><rect x="776.9" y="1147.5" width="1" height="2" fill="#9a9a9a"/><rect x="787.5" y="1147.5" width="1" height="2" fill="#9a9a9a"/><rect x="798.2" y="1147.5" width="1" height="2" fill="#9a9a9a"/><rect x="808.9" y="1146" width="1" height="5" fill="#9a9a9a"/><rect x="819.5" y="1147.5" width="1" height="2" fill="#9a9a9a"/><rect x="830.2" y="1147.5" width="1" height="2" fill="#9a9a9a"/><rect x="840.9" y="1147.5" width="1" height="2" fill="#9a9a9a"/><rect x="851.6" y="1147.5" width="1" height="2" fill="#9a9a9a"/><rect x="862.2" y="1146" width="1" height="5" fill="#9a9a9a"/><rect x="872.9" y="1147.5" width="1" height="2" fill="#9a9a9a"/><rect x="883.6" y="1147.5" width="1" height="2" fill="#9a9a9a"/><rect x="894.2" y="1147.5" width="1" height="2" fill="#9a9a9a"/><rect x="904.9" y="1147.5" width="1" height="2" fill="#9a9a9a"/><rect x="915.6" y="1146" width="1" height="5" fill="#9a9a9a"/><rect x="926.3" y="1147.5" width="1" height="2" fill="#9a9a9a"/><rect x="936.9" y="1147.5" width="1" height="2" fill="#9a9a9a"/><rect x="947.6" y="1147.5" width="1" height="2" fill="#9a9a9a"/><rect x="958.3" y="1147.5" width="1" height="2" fill="#9a9a9a"/><rect x="968.9" y="1146" width="1" height="5" fill="#9a9a9a"/><rect x="979.6" y="1147.5" width="1" height="2" fill="#9a9a9a"/><rect x="990.3" y="1147.5" width="1" height="2" fill="#9a9a9a"/><rect x="1001.0" y="1147.5" width="1" height="2" fill="#9a9a9a"/><rect x="1011.6" y="1147.5" width="1" height="2" fill="#9a9a9a"/><rect x="1022.3" y="1146" width="1" height="5" fill="#9a9a9a"/><rect x="382.0" y="1129" width="1" height="17" fill="#9a9a9a"/><rect x="702.2" y="1129" width="1" height="17" fill="#9a9a9a"/><rect x="1022.3" y="1129" width="1" height="17" fill="#9a9a9a"/></svg><div class="a" style="left:58px;top:1129px;width:9px;height:16px;background:#8aa6d4"></div><div class="t" style="left:68px;top:1130px;font-size:11px;color:#d0d0d0">0</div><div class="t" style="left:112.7px;top:1130px;font-size:11px;color:#d0d0d0">5</div><div class="t" style="left:163.0px;top:1130px;font-size:11px;color:#d0d0d0">10</div><div class="t" style="left:216.4px;top:1130px;font-size:11px;color:#d0d0d0">15</div><div class="t" style="left:269.7px;top:1130px;font-size:11px;color:#d0d0d0">20</div><div class="t" style="left:323.1px;top:1130px;font-size:11px;color:#d0d0d0">25</div><div class="t" style="left:376.4px;top:1130px;font-size:11px;color:#d0d0d0">30</div><div class="t" style="left:429.8px;top:1130px;font-size:11px;color:#d0d0d0">35</div><div class="t" style="left:483.1px;top:1130px;font-size:11px;color:#d0d0d0">40</div><div class="t" style="left:536.5px;top:1130px;font-size:11px;color:#d0d0d0">45</div><div class="t" style="left:589.9px;top:1130px;font-size:11px;color:#d0d0d0">50</div><div class="t" style="left:643.2px;top:1130px;font-size:11px;color:#d0d0d0">55</div><div class="t" style="left:696.6px;top:1130px;font-size:11px;color:#d0d0d0">60</div><div class="t" style="left:749.9px;top:1130px;font-size:11px;color:#d0d0d0">65</div><div class="t" style="left:803.3px;top:1130px;font-size:11px;color:#d0d0d0">70</div><div class="t" style="left:856.6px;top:1130px;font-size:11px;color:#d0d0d0">75</div><div class="t" style="left:910.0px;top:1130px;font-size:11px;color:#d0d0d0">80</div><div class="t" style="left:963.3px;top:1130px;font-size:11px;color:#d0d0d0">85</div><div class="t" style="left:1016.7px;top:1130px;font-size:11px;color:#d0d0d0">90</div><div class="a" style="left:1037px;top:1129px;width:73px;height:19px;background:#2e2e2e;border:1px solid #4a4a4a;border-radius:3px"></div><div class="t" style="left:1042px;top:1133px;font-size:11.5px;color:#dedede">0 F</div><svg class="a" style="left:1099px;top:1131px" width="9" height="16" viewBox="0 0 9 16"><path d="M1 6 L4.5 2.5 L8 6 M1 10 L4.5 13.5 L8 10" stroke="#9a9a9a" stroke-width="1" fill="none"/></svg>
<svg class="a" style="left:48px;top:1160px" width="6" height="21" viewBox="0 0 6 21"><rect x="0" y="0" width="1" height="1" fill="#6a6a6a"/><rect x="0" y="3" width="1" height="1" fill="#6a6a6a"/><rect x="0" y="6" width="1" height="1" fill="#6a6a6a"/><rect x="0" y="9" width="1" height="1" fill="#6a6a6a"/><rect x="0" y="12" width="1" height="1" fill="#6a6a6a"/><rect x="0" y="15" width="1" height="1" fill="#6a6a6a"/><rect x="0" y="18" width="1" height="1" fill="#6a6a6a"/><rect x="3" y="0" width="1" height="1" fill="#6a6a6a"/><rect x="3" y="3" width="1" height="1" fill="#6a6a6a"/><rect x="3" y="6" width="1" height="1" fill="#6a6a6a"/><rect x="3" y="9" width="1" height="1" fill="#6a6a6a"/><rect x="3" y="12" width="1" height="1" fill="#6a6a6a"/><rect x="3" y="15" width="1" height="1" fill="#6a6a6a"/><rect x="3" y="18" width="1" height="1" fill="#6a6a6a"/></svg><div class="a" style="left:56px;top:1159px;width:75px;height:19px;background:#2e2e2e;border:1px solid #4a4a4a;border-radius:3px"></div><div class="t" style="left:61px;top:1163px;font-size:11.5px;color:#dedede">0 F</div><svg class="a" style="left:120px;top:1161px" width="9" height="16" viewBox="0 0 9 16"><path d="M1 6 L4.5 2.5 L8 6 M1 10 L4.5 13.5 L8 10" stroke="#9a9a9a" stroke-width="1" fill="none"/></svg><div class="a" style="left:138px;top:1160px;width:380px;height:17px;background:#5c5c5c;border-radius:3px"></div><div class="a" style="left:144px;top:1163px;width:1px;height:11px;background:#909090"></div><div class="a" style="left:147px;top:1163px;width:1px;height:11px;background:#909090"></div><div class="t" style="left:153px;top:1162px;font-size:11.5px;color:#dedede">0 F</div><div class="t" style="left:480px;top:1162px;font-size:11.5px;color:#dedede">90 F</div><div class="a" style="left:509px;top:1163px;width:1px;height:11px;background:#909090"></div><div class="a" style="left:512px;top:1163px;width:1px;height:11px;background:#909090"></div><div class="a" style="left:525px;top:1159px;width:76px;height:19px;background:#2e2e2e;border:1px solid #4a4a4a;border-radius:3px"></div><div class="t" style="left:531px;top:1163px;font-size:11.5px;color:#dedede">90 F</div><svg class="a" style="left:590px;top:1161px" width="9" height="16" viewBox="0 0 9 16"><path d="M1 6 L4.5 2.5 L8 6 M1 10 L4.5 13.5 L8 10" stroke="#9a9a9a" stroke-width="1" fill="none"/></svg><div class="a" style="left:612px;top:1156px;width:26px;height:26px;background:#5a5a5a;border-radius:3px;box-shadow:0 0 0 1px #353535"></div><svg class="a" style="left:612px;top:1156px" width="26" height="26" viewBox="0 0 26 26"><rect x="7" y="7" width="2.6" height="12" fill="#161616"/><polygon points="19,7 9.5,13 19,19" fill="#161616"/></svg><div class="a" style="left:650px;top:1156px;width:138px;height:26px;background:#5a5a5a;border-radius:3px;box-shadow:0 0 0 1px #353535"></div><div class="a" style="left:677px;top:1156px;width:1px;height:26px;background:#4c4c4c"></div><div class="a" style="left:705px;top:1156px;width:1px;height:26px;background:#4c4c4c"></div><div class="a" style="left:733px;top:1156px;width:1px;height:26px;background:#4c4c4c"></div><div class="a" style="left:761px;top:1156px;width:1px;height:26px;background:#4c4c4c"></div><svg class="a" style="left:650px;top:1156px" width="27" height="26" viewBox="0 0 27 26"><rect x="6" y="6.5" width="3.4" height="13" rx="1" fill="#f4f4f4" stroke="#161616" stroke-width="0.8"/><polygon points="20,7 10.5,13 20,19" fill="#161616"/></svg><svg class="a" style="left:677px;top:1156px" width="28" height="26" viewBox="0 0 28 26"><polygon points="16,7 7,13 16,19" fill="#161616"/><rect x="18" y="7" width="2.6" height="12" fill="#161616"/></svg><svg class="a" style="left:705px;top:1156px" width="28" height="26" viewBox="0 0 28 26"><polygon points="8,5.5 21,13 8,20.5" fill="#161616"/></svg><svg class="a" style="left:733px;top:1156px" width="28" height="26" viewBox="0 0 28 26"><rect x="7" y="7" width="2.6" height="12" fill="#161616"/><polygon points="12,7 21,13 12,19" fill="#161616"/></svg><svg class="a" style="left:761px;top:1156px" width="27" height="26" viewBox="0 0 27 26"><polygon points="7,7 16.5,13 7,19" fill="#161616"/><rect x="17.5" y="6.5" width="3.4" height="13" rx="1" fill="#f4f4f4" stroke="#161616" stroke-width="0.8"/></svg><div class="a" style="left:800px;top:1156px;width:26px;height:26px;background:#5a5a5a;border-radius:3px;box-shadow:0 0 0 1px #353535"></div><svg class="a" style="left:800px;top:1156px" width="26" height="26" viewBox="0 0 26 26"><polygon points="7,7 16.5,13 7,19" fill="#161616"/><rect x="16.5" y="7" width="2.6" height="12" fill="#161616"/></svg><div class="a" style="left:838px;top:1156px;width:54px;height:26px;background:#5a5a5a;border-radius:3px;box-shadow:0 0 0 1px #353535"></div><div class="a" style="left:864px;top:1156px;width:1px;height:26px;background:#4c4c4c"></div><svg class="a" style="left:838px;top:1156px" width="26" height="26" viewBox="0 0 26 26"><circle cx="13" cy="13" r="9.5" fill="#e85a5a" stroke="#161616" stroke-width="1.6"/><path d="M9 17 L15 11" stroke="#161616" stroke-width="2.4"/><circle cx="16" cy="10" r="2.6" fill="#161616"/><circle cx="9" cy="17" r="1.4" fill="#161616"/></svg><svg class="a" style="left:865px;top:1156px" width="27" height="26" viewBox="0 0 27 26"><circle cx="13.5" cy="13" r="9.5" fill="#e85a5a" stroke="#161616" stroke-width="1.6"/><path d="M11 8 A5.5 5.5 0 0 0 11 18 M16 8 A5.5 5.5 0 0 1 16 18" stroke="#161616" stroke-width="2" fill="none"/></svg><div class="a" style="left:904px;top:1156px;width:26px;height:26px;background:#5a5a5a;border-radius:3px;box-shadow:0 0 0 1px #353535"></div><svg class="a" style="left:904px;top:1156px" width="26" height="26" viewBox="0 0 26 26"><circle cx="13" cy="13" r="9.5" fill="#e89a3a" stroke="#161616" stroke-width="1.6"/><g transform="translate(13,13)"><rect x="-1.5" y="-5.6" width="3" height="11.2" fill="#161616" transform="rotate(0)"/><rect x="-1.5" y="-5.6" width="3" height="11.2" fill="#161616" transform="rotate(45)"/><rect x="-1.5" y="-5.6" width="3" height="11.2" fill="#161616" transform="rotate(90)"/><rect x="-1.5" y="-5.6" width="3" height="11.2" fill="#161616" transform="rotate(135)"/><circle r="3.8" fill="#161616"/><circle r="1.5" fill="#e89a3a"/></g></svg><div class="a" style="left:934px;top:1156px;width:138px;height:26px;background:#5a5a5a;border-radius:3px;box-shadow:0 0 0 1px #353535"></div><div class="a" style="left:934px;top:1156px;width:110px;height:26px;background:#8aa6d4;border-radius:3px 0 0 3px"></div><div class="a" style="left:960px;top:1156px;width:1px;height:26px;background:#7a94c0"></div><div class="a" style="left:988px;top:1156px;width:1px;height:26px;background:#7a94c0"></div><div class="a" style="left:1016px;top:1156px;width:1px;height:26px;background:#7a94c0"></div><div class="a" style="left:1044px;top:1156px;width:1px;height:26px;background:#7a94c0"></div><svg class="a" style="left:934px;top:1156px" width="26" height="26" viewBox="0 0 26 26"><path d="M13 3.5 L16.5 7.5 L14.2 7.5 L14.2 11.8 L18.5 11.8 L18.5 9.5 L22.5 13 L18.5 16.5 L18.5 14.2 L14.2 14.2 L14.2 18.5 L16.5 18.5 L13 22.5 L9.5 18.5 L11.8 18.5 L11.8 14.2 L7.5 14.2 L7.5 16.5 L3.5 13 L7.5 9.5 L7.5 11.8 L11.8 11.8 L11.8 7.5 L9.5 7.5Z" fill="#f19d38" stroke="#161616" stroke-width="0.9"/></svg><svg class="a" style="left:961px;top:1156px" width="27" height="26" viewBox="0 0 27 26"><rect x="6" y="6" width="14.5" height="14.5" rx="2" fill="#f19d38" stroke="#161616" stroke-width="1.1"/><path d="M6.5 14 H13.5 V20.5 M13.5 14 L20 6.5" stroke="#6b4a1c" stroke-width="1" fill="none"/></svg><svg class="a" style="left:989px;top:1156px" width="27" height="26" viewBox="0 0 27 26"><path d="M6.5 15 A7 7 0 0 1 16 6" stroke="#161616" stroke-width="3.6" fill="none"/><path d="M20.5 11 A7 7 0 0 1 11 20" stroke="#161616" stroke-width="3.6" fill="none"/><path d="M6.5 15 A7 7 0 0 1 16 6" stroke="#f19d38" stroke-width="2.2" fill="none"/><path d="M20.5 11 A7 7 0 0 1 11 20" stroke="#f19d38" stroke-width="2.2" fill="none"/><polygon points="15,3 21,5.5 16,9.5" fill="#f19d38" stroke="#161616" stroke-width="0.8"/><polygon points="12,23 6,20.5 11,16.5" fill="#f19d38" stroke="#161616" stroke-width="0.8"/></svg><svg class="a" style="left:1017px;top:1156px" width="27" height="26" viewBox="0 0 27 26"><circle cx="13.5" cy="13" r="10" fill="none" stroke="#161616" stroke-width="3.4"/><circle cx="13.5" cy="13" r="10" fill="none" stroke="#f19d38" stroke-width="2"/><text x="13.5" y="18" text-anchor="middle" font-family="Liberation Sans" font-size="14" style="font-weight:700" fill="#161616" stroke="#161616" stroke-width="0.6">P</text></svg><svg class="a" style="left:1044px;top:1156px" width="28" height="26" viewBox="0 0 28 26"><circle cx="7" cy="6" r="2.4" fill="#f19d38"/><circle cx="7" cy="13" r="2.4" fill="#f19d38"/><circle cx="7" cy="20" r="2.4" fill="#161616"/><circle cx="14" cy="6" r="2.4" fill="#f19d38"/><circle cx="14" cy="13" r="2.4" fill="#f19d38"/><circle cx="14" cy="20" r="2.4" fill="#161616"/><circle cx="21" cy="6" r="2.4" fill="#161616"/><circle cx="21" cy="13" r="2.4" fill="#161616"/><circle cx="21" cy="20" r="2.4" fill="#161616"/></svg><div class="a" style="left:1084px;top:1156px;width:26px;height:26px;background:#8aa6d4;border-radius:3px;box-shadow:0 0 0 1px #353535"></div><svg class="a" style="left:1084px;top:1156px" width="26" height="26" viewBox="0 0 26 26"><rect x="7" y="4" width="12" height="19" fill="#f19d38" stroke="#161616" stroke-width="1"/><rect x="7.5" y="5" width="2" height="1.6" fill="#161616"/><rect x="16.5" y="5" width="2" height="1.6" fill="#161616"/><rect x="7.5" y="8" width="2" height="1.6" fill="#161616"/><rect x="16.5" y="8" width="2" height="1.6" fill="#161616"/><rect x="7.5" y="11" width="2" height="1.6" fill="#161616"/><rect x="16.5" y="11" width="2" height="1.6" fill="#161616"/><rect x="7.5" y="14" width="2" height="1.6" fill="#161616"/><rect x="16.5" y="14" width="2" height="1.6" fill="#161616"/><rect x="7.5" y="17" width="2" height="1.6" fill="#161616"/><rect x="16.5" y="17" width="2" height="1.6" fill="#161616"/><rect x="7.5" y="20" width="2" height="1.6" fill="#161616"/><rect x="16.5" y="20" width="2" height="1.6" fill="#161616"/><path d="M10 10.5 H16 M10 16.5 H16" stroke="#161616" stroke-width="1"/></svg><svg class="a" style="left:1104px;top:1176px" width="6" height="6" viewBox="0 0 6 6"><polygon points="6,0 6,6 0,6" fill="#161616"/></svg>
<div class="a" style="left:48px;top:1209px;width:727px;height:1px;background:#4a4a4a"></div><svg class="a" style="left:54px;top:1194px" width="15" height="11" viewBox="0 0 15 11"><rect x="0" y="0" width="14" height="2" fill="#9a9a9a"/><rect x="0" y="4.3" width="14" height="2" fill="#9a9a9a"/><rect x="0" y="8.6" width="14" height="2" fill="#9a9a9a"/></svg><div class="t" style="left:78px;top:1192px;font-size:12px;color:#dcd88e"><span class="c">创建</span></div><div class="t" style="left:114px;top:1192px;font-size:12px;color:#dcd88e"><span class="c">编辑</span></div><div class="t" style="left:150px;top:1192px;font-size:12px;color:#d6d6d6"><span class="c">查看</span></div><div class="t" style="left:186px;top:1192px;font-size:12px;color:#d6d6d6"><span class="c">选择</span></div><div class="t" style="left:222px;top:1192px;font-size:12px;color:#d6d6d6"><span class="c">材质</span></div><div class="t" style="left:258px;top:1192px;font-size:12px;color:#d6d6d6"><span class="c">纹理</span></div>
<div class="a" style="left:781px;top:1210px;width:329px;height:1px;background:#4a4a4a"></div><svg class="a" style="left:785px;top:1194px" width="15" height="11" viewBox="0 0 15 11"><rect x="0" y="0" width="14" height="2" fill="#9a9a9a"/><rect x="0" y="4.3" width="14" height="2" fill="#9a9a9a"/><rect x="0" y="8.6" width="14" height="2" fill="#9a9a9a"/></svg><div class="t" style="left:807px;top:1192px;font-size:12px;color:#d6d6d6"><span class="c">位置</span></div><div class="t" style="left:909px;top:1192px;font-size:12px;color:#d6d6d6"><span class="c">尺寸</span></div><div class="t" style="left:1011px;top:1192px;font-size:12px;color:#d6d6d6"><span class="c">旋转</span></div><div class="t" style="left:782px;top:1220px;font-size:12px;color:#cfcfcf">X</div><div class="a" style="left:795px;top:1217px;width:95px;height:18px;background:#2e2e2e;border:1px solid #464646;border-radius:3px"></div><div class="t" style="left:800px;top:1220px;font-size:12px;color:#e0e0e0">-119.812 cm</div><svg class="a" style="left:879px;top:1218px" width="9" height="16" viewBox="0 0 9 16"><path d="M1 6 L4.5 2.5 L8 6 M1 10 L4.5 13.5 L8 10" stroke="#9a9a9a" stroke-width="1" fill="none"/></svg><div class="t" style="left:892px;top:1220px;font-size:12px;color:#cfcfcf">X</div><div class="a" style="left:904px;top:1217px;width:95px;height:18px;background:#2e2e2e;border:1px solid #464646;border-radius:3px"></div><div class="t" style="left:909px;top:1220px;font-size:12px;color:#e0e0e0">200 cm</div><svg class="a" style="left:988px;top:1218px" width="9" height="16" viewBox="0 0 9 16"><path d="M1 6 L4.5 2.5 L8 6 M1 10 L4.5 13.5 L8 10" stroke="#9a9a9a" stroke-width="1" fill="none"/></svg><div class="t" style="left:1001px;top:1220px;font-size:12px;color:#cfcfcf">H</div><div class="a" style="left:1014px;top:1217px;width:93px;height:18px;background:#2e2e2e;border:1px solid #464646;border-radius:3px"></div><div class="t" style="left:1019px;top:1220px;font-size:12px;color:#e0e0e0">0 °</div><svg class="a" style="left:1096px;top:1218px" width="9" height="16" viewBox="0 0 9 16"><path d="M1 6 L4.5 2.5 L8 6 M1 10 L4.5 13.5 L8 10" stroke="#9a9a9a" stroke-width="1" fill="none"/></svg><div class="t" style="left:782px;top:1242px;font-size:12px;color:#cfcfcf">Y</div><div class="a" style="left:795px;top:1239px;width:95px;height:18px;background:#2e2e2e;border:1px solid #464646;border-radius:3px"></div><div class="t" style="left:800px;top:1242px;font-size:12px;color:#e0e0e0">0 cm</div><svg class="a" style="left:879px;top:1240px" width="9" height="16" viewBox="0 0 9 16"><path d="M1 6 L4.5 2.5 L8 6 M1 10 L4.5 13.5 L8 10" stroke="#9a9a9a" stroke-width="1" fill="none"/></svg><div class="t" style="left:892px;top:1242px;font-size:12px;color:#cfcfcf">Y</div><div class="a" style="left:904px;top:1239px;width:95px;height:18px;background:#2e2e2e;border:1px solid #464646;border-radius:3px"></div><div class="t" style="left:909px;top:1242px;font-size:12px;color:#e0e0e0">200 cm</div><svg class="a" style="left:988px;top:1240px" width="9" height="16" viewBox="0 0 9 16"><path d="M1 6 L4.5 2.5 L8 6 M1 10 L4.5 13.5 L8 10" stroke="#9a9a9a" stroke-width="1" fill="none"/></svg><div class="t" style="left:1001px;top:1242px;font-size:12px;color:#cfcfcf">P</div><div class="a" style="left:1014px;top:1239px;width:93px;height:18px;background:#2e2e2e;border:1px solid #464646;border-radius:3px"></div><div class="t" style="left:1019px;top:1242px;font-size:12px;color:#e0e0e0">0 °</div><svg class="a" style="left:1096px;top:1240px" width="9" height="16" viewBox="0 0 9 16"><path d="M1 6 L4.5 2.5 L8 6 M1 10 L4.5 13.5 L8 10" stroke="#9a9a9a" stroke-width="1" fill="none"/></svg><div class="t" style="left:782px;top:1264px;font-size:12px;color:#cfcfcf">Z</div><div class="a" style="left:795px;top:1261px;width:95px;height:18px;background:#2e2e2e;border:1px solid #464646;border-radius:3px"></div><div class="t" style="left:800px;top:1264px;font-size:12px;color:#e0e0e0">0 cm</div><svg class="a" style="left:879px;top:1262px" width="9" height="16" viewBox="0 0 9 16"><path d="M1 6 L4.5 2.5 L8 6 M1 10 L4.5 13.5 L8 10" stroke="#9a9a9a" stroke-width="1" fill="none"/></svg><div class="t" style="left:892px;top:1264px;font-size:12px;color:#cfcfcf">Z</div><div class="a" style="left:904px;top:1261px;width:95px;height:18px;background:#2e2e2e;border:1px solid #464646;border-radius:3px"></div><div class="t" style="left:909px;top:1264px;font-size:12px;color:#e0e0e0">200 cm</div><svg class="a" style="left:988px;top:1262px" width="9" height="16" viewBox="0 0 9 16"><path d="M1 6 L4.5 2.5 L8 6 M1 10 L4.5 13.5 L8 10" stroke="#9a9a9a" stroke-width="1" fill="none"/></svg><div class="t" style="left:1001px;top:1264px;font-size:12px;color:#cfcfcf">B</div><div class="a" style="left:1014px;top:1261px;width:93px;height:18px;background:#2e2e2e;border:1px solid #464646;border-radius:3px"></div><div class="t" style="left:1019px;top:1264px;font-size:12px;color:#e0e0e0">0 °</div><svg class="a" style="left:1096px;top:1262px" width="9" height="16" viewBox="0 0 9 16"><path d="M1 6 L4.5 2.5 L8 6 M1 10 L4.5 13.5 L8 10" stroke="#9a9a9a" stroke-width="1" fill="none"/></svg><div class="a" style="left:795px;top:1286px;width:94px;height:17px;background:#585858;border-radius:3px"></div><div class="t" style="left:801px;top:1288px;font-size:12px;color:#dedede"><span class="c">对象</span> (<span class="c">相对</span>)</div><svg class="a" style="left:875px;top:1291px" width="9" height="6" viewBox="0 0 9 6"><path d="M1 1L4.5 4.5L8 1" stroke="#d0d0d0" stroke-width="1.2" fill="none"/></svg><div class="a" style="left:904px;top:1286px;width:94px;height:17px;background:#585858;border-radius:3px"></div><div class="t" style="left:910px;top:1288px;font-size:12px;color:#dedede"><span class="c">绝对尺寸</span></div><svg class="a" style="left:984px;top:1291px" width="9" height="6" viewBox="0 0 9 6"><path d="M1 1L4.5 4.5L8 1" stroke="#d0d0d0" stroke-width="1.2" fill="none"/></svg><div class="a" style="left:1014px;top:1286px;width:93px;height:17px;background:#585858;border-radius:3px"></div><div class="t" style="left:1048.5px;top:1288px;font-size:12px;color:#dedede"><span class="c">应用</span></div>
<svg class="a" style="left:1121px;top:64.3px" width="15" height="11" viewBox="0 0 15 11"><rect x="0" y="0" width="14" height="2" fill="#9a9a9a"/><rect x="0" y="4.3" width="14" height="2" fill="#9a9a9a"/><rect x="0" y="8.6" width="14" height="2" fill="#9a9a9a"/></svg><div class="t" style="left:1145px;top:63px;font-size:12px;color:#d6d6d6"><span class="c">文件</span></div><div class="t" style="left:1181px;top:63px;font-size:12px;color:#d6d6d6"><span class="c">编辑</span></div><div class="t" style="left:1217px;top:63px;font-size:12px;color:#dcd88e"><span class="c">查看</span></div><div class="t" style="left:1253px;top:63px;font-size:12px;color:#d6d6d6"><span class="c">对象</span></div><div class="t" style="left:1289px;top:63px;font-size:12px;color:#dcd88e"><span class="c">标签</span></div><div class="t" style="left:1325px;top:63px;font-size:12px;color:#d6d6d6"><span class="c">书签</span></div><svg class="a" style="left:1420px;top:61px" width="14" height="16" viewBox="0 0 14 16"><circle cx="5.5" cy="5.5" r="4.3" stroke="#9a9a9a" stroke-width="1.4" fill="none"/><path d="M8.5 8.8 L12.5 14" stroke="#9a9a9a" stroke-width="2"/></svg><svg class="a" style="left:1437px;top:60px" width="18" height="18" viewBox="0 0 18 18"><path d="M9 1.5 L16.5 9 L13 9 L13 16.5 L5 16.5 L5 9 L1.5 9Z" fill="none" stroke="#9a9a9a" stroke-width="1.3" stroke-linejoin="round"/></svg><svg class="a" style="left:1457px;top:61px" width="16" height="16" viewBox="0 0 16 16"><path d="M1 1 H15 L9.5 8 V15.5 L6.5 13 V8Z" fill="none" stroke="#9a9a9a" stroke-width="1.3" stroke-linejoin="round"/></svg><svg class="a" style="left:1480px;top:61px" width="13" height="16" viewBox="0 0 13 16"><rect x="0.7" y="0.7" width="11.6" height="14.6" fill="none" stroke="#9a9a9a" stroke-width="1.3"/><rect x="0.7" y="0.7" width="11.6" height="1.5" fill="#9a9a9a"/><path d="M6.5 5 V11 M3.5 8 H9.5" stroke="#9a9a9a" stroke-width="1.6"/></svg><div class="a" style="left:1115px;top:81px;width:380px;height:1px;background:#4a4a4a"></div><div class="a" style="left:1115px;top:83px;width:380px;height:585px;background:#3c3c3c;border:1px solid #4a4a4a;border-top:none"></div><div class="a" style="left:1116px;top:84px;width:378px;height:20px;background:#4a4a4a"></div><div class="a" style="left:1189px;top:104px;width:1px;height:564px;background:#4a4a4a"></div><div class="a" style="left:1228px;top:84px;width:1px;height:584px;background:#4a4a4a"></div><svg class="a" style="left:1118px;top:84px" width="16" height="20" viewBox="0 0 16 20"><path d="M5.5 0 V6" stroke="#a0a0a0" stroke-width="1"/><rect x="1.5" y="6" width="8" height="8.5" fill="none" stroke="#a0a0a0" stroke-width="1"/><path d="M3.5 10.2 H7.5 M9.5 10.2 H14" stroke="#a0a0a0" stroke-width="1"/></svg><svg class="a" style="left:1133px;top:87px" width="13" height="14" viewBox="0 0 13 14"><path d="M6.5 0.8 L12.2 3.5 L12.2 10.5 L6.5 13.5 L0.8 10.5 L0.8 3.5Z" fill="#5aa0e0" stroke="#233" stroke-width="0.6"/><path d="M0.8 3.5 L6.5 6.3 L12.2 3.5 L6.5 0.8Z" fill="#c4e4ff"/><path d="M0.8 3.5 L6.5 6.3 L6.5 13.5 L0.8 10.5Z" fill="#8cc6f6"/></svg><div class="t" style="left:1151px;top:88px;font-size:12px;color:#ffc838"><span class="c">立方体</span></div><svg class="a" style="left:1193px;top:88px" width="12" height="12" viewBox="0 0 12 12"><rect x="0" y="0" width="12" height="12" rx="2" fill="#8a8a8a"/><path d="M3 9.5 L9.5 3" stroke="#2a2a2a" stroke-width="0.9"/></svg><svg class="a" style="left:1209px;top:89px" width="6" height="11" viewBox="0 0 6 11"><circle cx="3" cy="2.5" r="2.2" fill="#8a8a8a"/><circle cx="3" cy="8.5" r="2.2" fill="#8a8a8a"/></svg><svg class="a" style="left:1216px;top:89px" width="12" height="8" viewBox="0 0 12 8"><path d="M1 4 L4.5 7 L11 1" stroke="#3ee08a" stroke-width="1.4" fill="none"/></svg><svg class="a" style="left:1231px;top:85px" width="16" height="16" viewBox="0 0 16 16"><defs><radialGradient id="tb" cx="0.35" cy="0.3" r="0.7"><stop offset="0" stop-color="#f0b070"/><stop offset="1" stop-color="#8a4e18"/></radialGradient></defs><circle cx="4.5" cy="4.3" r="3.6" fill="url(#tb)"/><circle cx="11" cy="11.2" r="3.7" fill="url(#tb)"/></svg><svg class="a" style="left:1132px;top:104px" width="12" height="12" viewBox="0 0 12 12"><path d="M2.5 0 V10.5 H11" stroke="#a0a0a0" stroke-width="1" fill="none"/></svg><svg class="a" style="left:1144px;top:107px" width="13" height="14" viewBox="0 0 13 14"><circle cx="6.5" cy="3.3" r="3" fill="#8cc6f6"/><path d="M0.5 13.5 Q0.5 7 6.5 7 Q12.5 7 12.5 13.5Z" fill="#8cc6f6"/><path d="M4 7 L6.5 10 L9 7" fill="#5aa0e0"/></svg><div class="t" style="left:1162px;top:108px;font-size:12px;color:#e89030"><span class="c">人偶</span></div><svg class="a" style="left:1193px;top:108px" width="12" height="12" viewBox="0 0 12 12"><rect x="0" y="0" width="12" height="12" rx="2" fill="#8a8a8a"/><path d="M3 9.5 L9.5 3" stroke="#2a2a2a" stroke-width="0.9"/></svg><svg class="a" style="left:1209px;top:109px" width="6" height="11" viewBox="0 0 6 11"><circle cx="3" cy="2.5" r="2.2" fill="#8a8a8a"/><circle cx="3" cy="8.5" r="2.2" fill="#8a8a8a"/></svg><svg class="a" style="left:1216px;top:109px" width="12" height="8" viewBox="0 0 12 8"><path d="M1 4 L4.5 7 L11 1" stroke="#3ee08a" stroke-width="1.4" fill="none"/></svg><svg class="a" style="left:1231px;top:105px" width="16" height="16" viewBox="0 0 16 16"><defs><radialGradient id="tb" cx="0.35" cy="0.3" r="0.7"><stop offset="0" stop-color="#f0b070"/><stop offset="1" stop-color="#8a4e18"/></radialGradient></defs><circle cx="4.5" cy="4.3" r="3.6" fill="url(#tb)"/><circle cx="11" cy="11.2" r="3.7" fill="url(#tb)"/></svg><svg class="a" style="left:1185px;top:105px" width="66" height="116" viewBox="0 0 66 116"><polygon points="6,6 6.5,20 10,17.5 60,111 61,110.5 15.8,13.5 17.5,9.8" fill="#e8202a"/></svg>
<svg class="a" style="left:1121px;top:680px" width="15" height="11" viewBox="0 0 15 11"><rect x="0" y="0" width="14" height="2" fill="#9a9a9a"/><rect x="0" y="4.3" width="14" height="2" fill="#9a9a9a"/><rect x="0" y="8.6" width="14" height="2" fill="#9a9a9a"/></svg><div class="t" style="left:1145px;top:678px;font-size:12px;color:#d6d6d6"><span class="c">模式</span></div><div class="t" style="left:1181px;top:678px;font-size:12px;color:#d6d6d6"><span class="c">编辑</span></div><div class="t" style="left:1217px;top:678px;font-size:12px;color:#d6d6d6"><span class="c">用户数据</span></div><svg class="a" style="left:1358px;top:677px" width="18" height="16" viewBox="0 0 18 16"><path d="M8 1.5 L1.5 8 L8 14.5 M1.5 8 H17" stroke="#9a9a9a" stroke-width="1.5" fill="none"/></svg><svg class="a" style="left:1378px;top:677px" width="18" height="16" viewBox="0 0 18 16"><path d="M10 1.5 L16.5 8 L10 14.5 M16.5 8 H1" stroke="#5e5e5e" stroke-width="1.5" fill="none"/></svg><svg class="a" style="left:1399px;top:677px" width="15" height="17" viewBox="0 0 15 17"><path d="M1.5 8 L7.5 1.5 L13.5 8 M7.5 1.5 V17" stroke="#9a9a9a" stroke-width="1.5" fill="none"/></svg><svg class="a" style="left:1420px;top:677px" width="14" height="16" viewBox="0 0 14 16"><circle cx="5.5" cy="5.5" r="4.3" stroke="#9a9a9a" stroke-width="1.4" fill="none"/><path d="M8.5 8.8 L12.5 14" stroke="#9a9a9a" stroke-width="2"/></svg><svg class="a" style="left:1440px;top:677px" width="14" height="17" viewBox="0 0 14 17"><path d="M3.5 7.5 V4.5 A3.5 3.5 0 0 1 10.5 4.5" stroke="#9a9a9a" stroke-width="1.3" fill="none"/><rect x="1" y="7.5" width="12" height="9" rx="1" fill="none" stroke="#9a9a9a" stroke-width="1.3"/><circle cx="7" cy="12" r="1.2" fill="#9a9a9a"/></svg><svg class="a" style="left:1458px;top:676px" width="17" height="17" viewBox="0 0 17 17"><circle cx="8.5" cy="8.5" r="7.3" fill="none" stroke="#9a9a9a" stroke-width="1.2"/><circle cx="8.5" cy="8.5" r="2.6" fill="none" stroke="#9a9a9a" stroke-width="1.2"/></svg><svg class="a" style="left:1480px;top:677px" width="13" height="16" viewBox="0 0 13 16"><rect x="0.7" y="0.7" width="11.6" height="14.6" fill="none" stroke="#9a9a9a" stroke-width="1.3"/><rect x="0.7" y="0.7" width="11.6" height="1.5" fill="#9a9a9a"/><path d="M6.5 5 V11 M3.5 8 H9.5" stroke="#9a9a9a" stroke-width="1.6"/></svg><div class="a" style="left:1115px;top:696px;width:380px;height:1px;background:#4a4a4a"></div><svg class="a" style="left:1120px;top:702px" width="16" height="17" viewBox="0 0 13 14"><path d="M6.5 0.8 L12.2 3.5 L12.2 10.5 L6.5 13.5 L0.8 10.5 L0.8 3.5Z" fill="#5aa0e0" stroke="#233" stroke-width="0.6"/><path d="M0.8 3.5 L6.5 6.3 L12.2 3.5 L6.5 0.8Z" fill="#c4e4ff"/><path d="M0.8 3.5 L6.5 6.3 L6.5 13.5 L0.8 10.5Z" fill="#8cc6f6"/></svg><div class="t" style="left:1143px;top:704px;font-size:12px;color:#dedede"><span class="c">立方体对象</span> [<span class="c">立方体</span>]</div><div class="a" style="left:1118px;top:725px;width:375px;height:18px;background:#5a5a5a;border-radius:3px"></div><div class="a" style="left:1306px;top:725px;width:93px;height:18px;background:#8aa6d4"></div><div class="a" style="left:1211px;top:725px;width:1px;height:18px;background:#4a4a4a"></div><div class="a" style="left:1305px;top:725px;width:1px;height:18px;background:#4a4a4a"></div><div class="a" style="left:1399px;top:725px;width:1px;height:18px;background:#4a4a4a"></div><div class="t" style="left:1153px;top:728px;font-size:12px;color:#e0e0e0"><span class="c">基本</span></div><div class="t" style="left:1246px;top:728px;font-size:12px;color:#e0e0e0"><span class="c">坐标</span></div><div class="t" style="left:1340px;top:728px;font-size:12px;color:#111"><span class="c">对象</span></div><div class="t" style="left:1403px;top:728px;font-size:12px;color:#e0e0e0;letter-spacing:-0.2px"><span class="c">平滑着色</span>(Phong)</div><div class="t" style="left:1119px;top:752px;font-size:12px;color:#ececec;font-weight:bold"><span class="c">对象属性</span></div><svg class="a" style="left:1119px;top:773px" width="14" height="14" viewBox="0 0 14 14"><circle cx="7" cy="7" r="6" fill="#2e2e2e" stroke="#8a8a8a" stroke-width="1.3"/><circle cx="7" cy="7" r="3.6" fill="#8a8a8a"/></svg><div class="t" style="left:1141px;top:774px;font-size:12px;color:#d6d6d6"><span class="c">尺寸</span> . X</div><div class="a" style="left:1185px;top:771px;width:75px;height:18px;background:#2e2e2e;border:1px solid #464646;border-radius:3px"></div><div class="t" style="left:1190px;top:774px;font-size:12px;color:#e6e6e6">200 cm</div><svg class="a" style="left:1248px;top:772px" width="9" height="16" viewBox="0 0 9 16"><path d="M1 6 L4.5 2.5 L8 6 M1 10 L4.5 13.5 L8 10" stroke="#9a9a9a" stroke-width="1" fill="none"/></svg><svg class="a" style="left:1264px;top:773px" width="14" height="14" viewBox="0 0 14 14"><circle cx="7" cy="7" r="6" fill="#2e2e2e" stroke="#8a8a8a" stroke-width="1.3"/><circle cx="7" cy="7" r="3.6" fill="#8a8a8a"/></svg><div class="t" style="left:1286px;top:774px;font-size:12px;color:#d6d6d6"><span class="c">分段</span> X</div><div class="a" style="left:1324px;top:771px;width:75px;height:18px;background:#2e2e2e;border:1px solid #464646;border-radius:3px"></div><div class="t" style="left:1330px;top:774px;font-size:12px;color:#e6e6e6">1</div><svg class="a" style="left:1387px;top:772px" width="9" height="16" viewBox="0 0 9 16"><path d="M1 6 L4.5 2.5 L8 6 M1 10 L4.5 13.5 L8 10" stroke="#9a9a9a" stroke-width="1" fill="none"/></svg><svg class="a" style="left:1119px;top:795px" width="14" height="14" viewBox="0 0 14 14"><circle cx="7" cy="7" r="6" fill="#2e2e2e" stroke="#8a8a8a" stroke-width="1.3"/><circle cx="7" cy="7" r="3.6" fill="#8a8a8a"/></svg><div class="t" style="left:1141px;top:796px;font-size:12px;color:#d6d6d6"><span class="c">尺寸</span> . Y</div><div class="a" style="left:1185px;top:793px;width:75px;height:18px;background:#2e2e2e;border:1px solid #464646;border-radius:3px"></div><div class="t" style="left:1190px;top:796px;font-size:12px;color:#e6e6e6">200 cm</div><svg class="a" style="left:1248px;top:794px" width="9" height="16" viewBox="0 0 9 16"><path d="M1 6 L4.5 2.5 L8 6 M1 10 L4.5 13.5 L8 10" stroke="#9a9a9a" stroke-width="1" fill="none"/></svg><svg class="a" style="left:1264px;top:795px" width="14" height="14" viewBox="0 0 14 14"><circle cx="7" cy="7" r="6" fill="#2e2e2e" stroke="#8a8a8a" stroke-width="1.3"/><circle cx="7" cy="7" r="3.6" fill="#8a8a8a"/></svg><div class="t" style="left:1286px;top:796px;font-size:12px;color:#d6d6d6"><span class="c">分段</span> Y</div><div class="a" style="left:1324px;top:793px;width:75px;height:18px;background:#2e2e2e;border:1px solid #464646;border-radius:3px"></div><div class="t" style="left:1330px;top:796px;font-size:12px;color:#e6e6e6">1</div><svg class="a" style="left:1387px;top:794px" width="9" height="16" viewBox="0 0 9 16"><path d="M1 6 L4.5 2.5 L8 6 M1 10 L4.5 13.5 L8 10" stroke="#9a9a9a" stroke-width="1" fill="none"/></svg><svg class="a" style="left:1119px;top:817px" width="14" height="14" viewBox="0 0 14 14"><circle cx="7" cy="7" r="6" fill="#2e2e2e" stroke="#8a8a8a" stroke-width="1.3"/><circle cx="7" cy="7" r="3.6" fill="#8a8a8a"/></svg><div class="t" style="left:1141px;top:818px;font-size:12px;color:#d6d6d6"><span class="c">尺寸</span> . Z</div><div class="a" style="left:1185px;top:815px;width:75px;height:18px;background:#2e2e2e;border:1px solid #464646;border-radius:3px"></div><div class="t" style="left:1190px;top:818px;font-size:12px;color:#e6e6e6">200 cm</div><svg class="a" style="left:1248px;top:816px" width="9" height="16" viewBox="0 0 9 16"><path d="M1 6 L4.5 2.5 L8 6 M1 10 L4.5 13.5 L8 10" stroke="#9a9a9a" stroke-width="1" fill="none"/></svg><svg class="a" style="left:1264px;top:817px" width="14" height="14" viewBox="0 0 14 14"><circle cx="7" cy="7" r="6" fill="#2e2e2e" stroke="#8a8a8a" stroke-width="1.3"/><circle cx="7" cy="7" r="3.6" fill="#8a8a8a"/></svg><div class="t" style="left:1286px;top:818px;font-size:12px;color:#d6d6d6"><span class="c">分段</span> Z</div><div class="a" style="left:1324px;top:815px;width:75px;height:18px;background:#2e2e2e;border:1px solid #464646;border-radius:3px"></div><div class="t" style="left:1330px;top:818px;font-size:12px;color:#e6e6e6">1</div><svg class="a" style="left:1387px;top:816px" width="9" height="16" viewBox="0 0 9 16"><path d="M1 6 L4.5 2.5 L8 6 M1 10 L4.5 13.5 L8 10" stroke="#9a9a9a" stroke-width="1" fill="none"/></svg><svg class="a" style="left:1119px;top:845px" width="14" height="14" viewBox="0 0 14 14"><circle cx="7" cy="7" r="6" fill="#2e2e2e" stroke="#8a8a8a" stroke-width="1.3"/><circle cx="7" cy="7" r="3.6" fill="#8a8a8a"/></svg><div class="t" style="left:1141px;top:846px;font-size:12px;color:#d6d6d6"><span class="c">分离表面</span></div><div class="a" style="left:1189px;top:846px;width:13px;height:13px;border:1.3px solid #9a9a9a;border-radius:2px"></div><svg class="a" style="left:1119px;top:865px" width="14" height="14" viewBox="0 0 14 14"><circle cx="7" cy="7" r="6" fill="#2e2e2e" stroke="#8a8a8a" stroke-width="1.3"/><circle cx="7" cy="7" r="3.6" fill="#8a8a8a"/></svg><div class="t" style="left:1141px;top:866px;font-size:12px;color:#d6d6d6"><span class="c">圆角</span> . . .</div><div class="a" style="left:1189px;top:866px;width:13px;height:13px;border:1.3px solid #9a9a9a;border-radius:2px"></div><svg class="a" style="left:1120px;top:887px" width="12" height="12" viewBox="0 0 12 12"><circle cx="6" cy="6" r="4" fill="#363636"/></svg><div class="t" style="left:1141px;top:887px;font-size:12px;color:#6e6e6e"><span class="c">圆角半径</span></div><div class="a" style="left:1190px;top:884px;width:75px;height:18px;background:#393939;border:1px solid #424242;border-radius:3px"></div><div class="t" style="left:1195px;top:887px;font-size:12px;color:#6a6a6a">3 cm</div><svg class="a" style="left:1253px;top:885px" width="9" height="16" viewBox="0 0 9 16"><path d="M1 6 L4.5 2.5 L8 6 M1 10 L4.5 13.5 L8 10" stroke="#5a5a5a" stroke-width="1" fill="none"/></svg><svg class="a" style="left:1120px;top:909px" width="12" height="12" viewBox="0 0 12 12"><circle cx="6" cy="6" r="4" fill="#363636"/></svg><div class="t" style="left:1141px;top:909px;font-size:12px;color:#6e6e6e"><span class="c">圆角细分</span></div><div class="a" style="left:1190px;top:906px;width:75px;height:18px;background:#393939;border:1px solid #424242;border-radius:3px"></div><div class="t" style="left:1195px;top:909px;font-size:12px;color:#6a6a6a">3</div><svg class="a" style="left:1253px;top:907px" width="9" height="16" viewBox="0 0 9 16"><path d="M1 6 L4.5 2.5 L8 6 M1 10 L4.5 13.5 L8 10" stroke="#5a5a5a" stroke-width="1" fill="none"/></svg>
<div class="a" style="left:1497px;top:58px;width:15px;height:33px;background:#3c3c3c"></div><div class="a" style="left:1497px;top:673px;width:15px;height:33px;background:#3c3c3c"></div><div class="t" style="left:1515px;top:64px;font-size:12px;color:#d6d6d6;transform:rotate(90deg);transform-origin:0 0;line-height:14px">对象</div><div class="t" style="left:1515px;top:97px;font-size:12px;color:#9a9a9a;transform:rotate(90deg);transform-origin:0 0;line-height:14px">场次</div><div class="t" style="left:1515px;top:132px;font-size:12px;color:#9a9a9a;transform:rotate(90deg);transform-origin:0 0;line-height:14px">内容浏览器</div><div class="t" style="left:1515px;top:678.5px;font-size:12px;color:#d6d6d6;transform:rotate(90deg);transform-origin:0 0;line-height:14px">属性</div><div class="t" style="left:1515px;top:713px;font-size:12px;color:#9a9a9a;transform:rotate(90deg);transform-origin:0 0;line-height:14px">层</div><div class="t" style="left:1515px;top:736px;font-size:12px;color:#9a9a9a;transform:rotate(90deg);transform-origin:0 0;line-height:14px">构造</div>
</body></html>
